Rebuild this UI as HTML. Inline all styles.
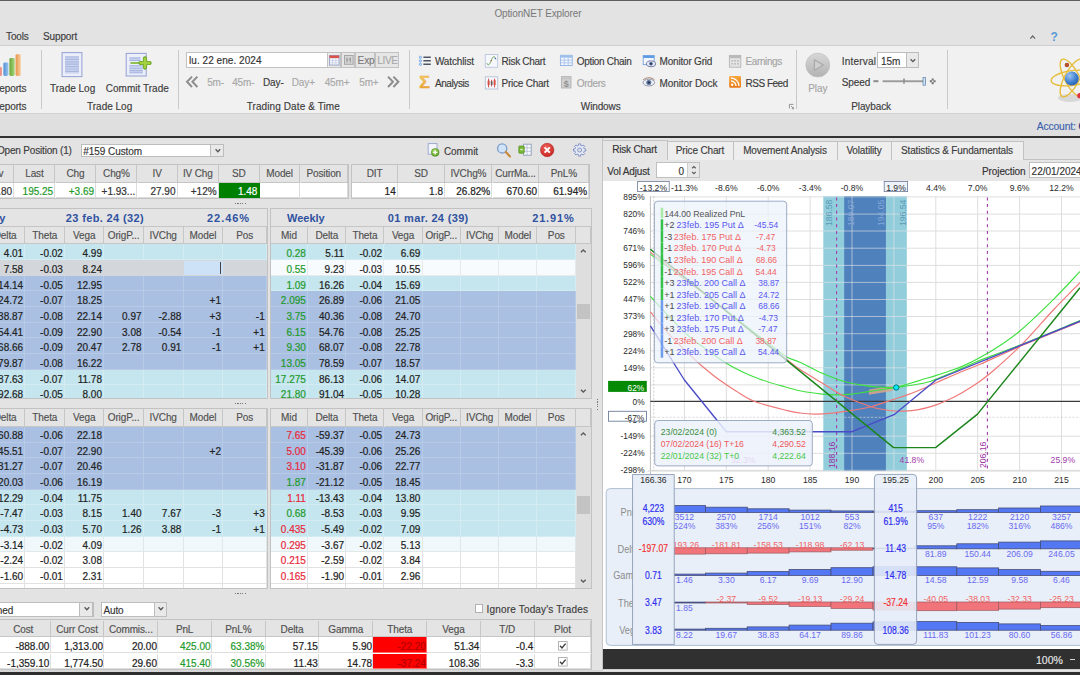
<!DOCTYPE html><html><head><meta charset="utf-8"><title>OptionNET Explorer</title><style>
*{box-sizing:border-box;margin:0;padding:0}
html,body{width:1080px;height:675px;overflow:hidden;background:#e3e3e3}
body{font-family:"Liberation Sans",sans-serif;font-size:10px;color:#333;position:relative;line-height:1}
.a{position:absolute;white-space:nowrap}
.t{-webkit-text-stroke:0.15px currentColor;position:absolute;white-space:nowrap;line-height:12px;height:12px;letter-spacing:-0.12px;color:#3c3c3c}
.c{text-align:center}
.r{text-align:right}
.g{color:#9a9a9a}
.hd{-webkit-text-stroke:0.15px currentColor;position:absolute;background:#e4e4e4;border-right:1px solid #c6c6c6;border-bottom:1px solid #c6c6c6;text-align:center;color:#505050;overflow:hidden;white-space:nowrap;letter-spacing:-0.12px}
.cell{-webkit-text-stroke:0.2px currentColor;position:absolute;overflow:hidden;white-space:nowrap;text-align:right;color:#222;border-right:1px solid rgba(214,221,230,.75);border-bottom:1px solid rgba(214,221,230,.75);padding-right:1.3px}
.gr{color:#1f9a2c !important}
.rd{color:#e8283c !important}
.bh{position:absolute;font-weight:bold;color:#2f52a0;font-size:11px;line-height:14px;white-space:nowrap}
.sep{position:absolute;width:1px;background:#c9c9c9;top:50px;height:59px}
.combo{position:absolute;background:#fff;border:1px solid #bcbcbc}
.cbtn{position:absolute;background:#e6e6e6;border:1px solid #bcbcbc}
</style></head><body>
<div class="a" style="left:0.0px;top:0.0px;width:1080.0px;height:1.0px;background:#5e5e5e"></div>
<div class="t " style="left:494.4px;top:8.1px;color:#787878;letter-spacing:-0.13px;-webkit-text-stroke:0">OptionNET Explorer</div>
<div class="t " style="left:6.0px;top:31.1px;">Tools</div>
<div class="t " style="left:43.0px;top:31.1px;">Support</div>
<svg class="a" style="left:1026px;top:30px" width="40" height="14" viewBox="0 0 40 14"><path d="M4.3 8.6 L6.7 6 L9.1 8.6" fill="none" stroke="#666" stroke-width="1.2"/><text x="24.5" y="11" font-family="Liberation Sans,sans-serif" font-size="12" font-weight="bold" fill="#5b9bd5">?</text></svg>
<div class="a" style="left:0.0px;top:45.0px;width:1080.0px;height:69.0px;background:#f1f1f1;border-top:1px solid #cfcfcf;border-bottom:1px solid #d2d2d2"></div>
<div class="a" style="left:0.0px;top:114.0px;width:1080.0px;height:22.0px;background:#dfdfdf"></div>
<div class="a" style="left:0.0px;top:135.8px;width:1080.0px;height:1.8px;background:#333"></div>
<div class="t " style="left:1036.7px;top:120.7px;color:#3b62ad;font-size:10.3px">Account:</div>
<div class="t " style="left:1078.4px;top:120.7px;color:#2a3f8a;font-size:10.3px;font-weight:bold">C</div>
<div class="sep" style="left:41.3px"></div>
<div class="sep" style="left:177.6px"></div>
<div class="sep" style="left:409.3px"></div>
<div class="sep" style="left:795.6px"></div>
<div class="sep" style="left:947.1px"></div>
<svg class="a" style="left:0;top:52px" width="24" height="26" viewBox="0 0 24 26">
<defs><linearGradient id="br" x1="0" x2="1"><stop offset="0" stop-color="#e06a62"/><stop offset="1" stop-color="#f3a29b"/></linearGradient>
<linearGradient id="bb" x1="0" x2="1"><stop offset="0" stop-color="#4f8fd6"/><stop offset="1" stop-color="#9cc6ee"/></linearGradient>
<linearGradient id="bg" x1="0" x2="1"><stop offset="0" stop-color="#6aa63a"/><stop offset="1" stop-color="#a9d67c"/></linearGradient>
<linearGradient id="bo" x1="0" x2="1"><stop offset="0" stop-color="#e89448"/><stop offset="1" stop-color="#f8cfa0"/></linearGradient></defs>
<rect x="-3" y="15" width="5" height="9" rx="1.2" fill="url(#br)"/>
<rect x="3.4" y="10.4" width="5" height="13.6" rx="1.4" fill="url(#bb)"/>
<rect x="9.4" y="6" width="5.3" height="18" rx="1.4" fill="url(#bg)"/>
<rect x="15.6" y="2.2" width="5.2" height="21.8" rx="1.4" fill="url(#bo)"/>
</svg>
<div class="t " style="left:-7.8px;top:83.4px;">Reports</div>
<div class="t " style="left:-7.8px;top:101.3px;">Reports</div>
<svg class="a" style="left:60px;top:51px" width="24" height="27" viewBox="0 0 24 27">
<rect x="2.1" y="1.6" width="19.8" height="24" fill="#eceffa" stroke="#9ba6d6" stroke-width="1.1"/>
<rect x="5" y="5" width="14" height="17.6" fill="#cdd6f0"/>
<g stroke="#a9b6e0" stroke-width="1.2"><path d="M5 6H19M5 8.4H19M5 10.8H19M5 13.2H19M5 15.6H19M5 18H19M5 20.4H19"/></g></svg>
<div class="t " style="left:50.0px;top:83.4px;letter-spacing:0">Trade Log</div>
<svg class="a" style="left:124px;top:51px" width="28" height="27" viewBox="0 0 28 27">
<rect x="2.2" y="2.4" width="20" height="22.6" fill="#eceffa" stroke="#9ba6d6" stroke-width="1.1"/>
<rect x="5.4" y="6" width="11" height="4" fill="#cdd6f0"/><rect x="5.4" y="14" width="13.4" height="8.4" fill="#cdd6f0"/>
<g stroke="#a9b6e0" stroke-width="1.1"><path d="M5.4 7H16.4M5.4 9.4H16.4M5.4 14.8H18.8M5.4 17.2H18.8M5.4 19.6H18.8M5.4 21.8H18.8"/></g>
<path d="M6.4 12H15.6" stroke="#86bc3e" stroke-width="1.8"/>
<path d="M21 7.4V16.6M16.4 12H25.6" stroke="#6aa524" stroke-width="4.2" stroke-linecap="round"/>
<path d="M21 7.8V16.2M16.8 12H25.2" stroke="#a2d040" stroke-width="2.6" stroke-linecap="round"/></svg>
<div class="t " style="left:105.8px;top:83.4px;letter-spacing:0.02px">Commit Trade</div>
<div class="t " style="left:87.0px;top:101.3px;letter-spacing:0">Trade Log</div>
<div class="a" style="left:186.2px;top:52.2px;width:212.8px;height:16.0px;background:#fff;border:1px solid #c2c2c2"></div>
<div class="t " style="left:189.0px;top:54.6px;color:#333;letter-spacing:0.05px">lu. 22 ene. 2024</div>
<div class="a" style="left:327.3px;top:52.2px;width:14.0px;height:16.0px;background:#ebebeb;border:1px solid #c2c2c2"></div>
<svg class="a" style="left:329px;top:54.5px" width="11" height="11" viewBox="0 0 11 11"><rect x=".5" y=".5" width="9.6" height="9.6" fill="#f4f6fb" stroke="#9aa6c8"/><rect x=".5" y=".5" width="9.6" height="2.6" fill="#d9534a"/><path d="M.5 5.4H10M.5 7.8H10M3.6 3V10M6.8 3V10" stroke="#c5cde2" stroke-width=".7"/></svg>
<div class="a" style="left:341.3px;top:52.2px;width:13.5px;height:16.0px;background:#e6e6e6;border:1px solid #c2c2c2"></div>
<svg class="a" style="left:343.5px;top:55px" width="10" height="10" viewBox="0 0 10 10"><rect x=".5" y=".5" width="8.6" height="8.8" fill="#d6d6d6" stroke="#a6a6a6"/><path d="M3 2.5V7.5M6.3 2.5V7.5M3 5H4.3M5 4.2H6.3" stroke="#8a8a8a" stroke-width=".9"/></svg>
<div class="a" style="left:354.5px;top:52.2px;width:20.3px;height:16.0px;background:#e6e6e6;border:1px solid #c2c2c2"></div>
<div class="t " style="left:357.6px;top:54.6px;color:#7a7a7a;letter-spacing:-0.1px">Exp</div>
<div class="a" style="left:374.5px;top:52.2px;width:24.5px;height:16.0px;background:#e6e6e6;border:1px solid #c2c2c2"></div>
<div class="t " style="left:377.2px;top:54.6px;color:#a9a9a9;letter-spacing:-0.3px">LIVE</div>
<svg class="a" style="left:184px;top:75px" width="216" height="14" viewBox="0 0 216 14"><g fill="none" stroke="#8e8e8e" stroke-width="2"><path d="M8 1.6 L3 6.8 L8 12M13.4 1.6 L8.4 6.8 L13.4 12"/><path d="M204 1.6 L209 6.8 L204 12M209.4 1.6 L214.4 6.8 L209.4 12"/></g></svg>
<div class="t c" style="left:195.6px;top:76.9px;width:40.0px;color:#a8a8a8">5m-</div>
<div class="t c" style="left:223.3px;top:76.9px;width:40.0px;color:#a8a8a8">45m-</div>
<div class="t c" style="left:253.3px;top:76.9px;width:40.0px;">Day-</div>
<div class="t c" style="left:283.3px;top:76.9px;width:40.0px;color:#a8a8a8">Day+</div>
<div class="t c" style="left:317.1px;top:76.9px;width:40.0px;color:#a8a8a8">45m+</div>
<div class="t c" style="left:348.9px;top:76.9px;width:40.0px;color:#a8a8a8">5m+</div>
<div class="t c" style="left:243.3px;top:101.3px;width:100.0px;letter-spacing:0.1px">Trading Date &amp; Time</div>
<div class="t " style="left:434.9px;top:56.2px;letter-spacing:-0.12px;">Watchlist</div>
<div class="t " style="left:434.9px;top:77.8px;letter-spacing:-0.4px;">Analysis</div>
<div class="t " style="left:501.6px;top:56.2px;letter-spacing:-0.3px;">Risk Chart</div>
<div class="t " style="left:501.6px;top:77.8px;letter-spacing:-0.25px;">Price Chart</div>
<div class="t " style="left:576.7px;top:56.2px;letter-spacing:-0.3px;">Option Chain</div>
<div class="t " style="left:576.7px;top:77.8px;letter-spacing:-0.3px;color:#a5a5a5">Orders</div>
<div class="t " style="left:659.6px;top:56.2px;letter-spacing:-0.2px;">Monitor Grid</div>
<div class="t " style="left:659.6px;top:77.8px;letter-spacing:-0.1px;">Monitor Dock</div>
<div class="t " style="left:745.6px;top:56.2px;letter-spacing:-0.4px;color:#a5a5a5">Earnings</div>
<div class="t " style="left:745.6px;top:77.8px;letter-spacing:-0.5px;">RSS Feed</div>
<div class="t c" style="left:570.7px;top:101.3px;width:60.0px;">Windows</div>
<svg class="a" style="left:418px;top:54px" width="376" height="58" viewBox="0 0 376 58">
<!-- watchlist -->
<g stroke="#4d5864" stroke-width="1.5"><path d="M5.4 3.3H12.8M5.4 6.8H12.8M5.4 10.3H12.8"/></g>
<g fill="#d6e8fb" stroke="#5f9de2" stroke-width=".8"><circle cx="2.4" cy="3.3" r="1.1"/><circle cx="2.4" cy="6.8" r="1.1"/><circle cx="2.4" cy="10.3" r="1.1"/></g>
<!-- analysis sigma -->
<defs><linearGradient id="sg" x1="0" y1="0" x2="0" y2="1"><stop offset="0" stop-color="#f9d678"/><stop offset="1" stop-color="#e89a28"/></linearGradient></defs><text x="1.2" y="33.7" font-family="Liberation Sans,sans-serif" font-size="16" font-weight="bold" fill="url(#sg)" stroke="#e6a432" stroke-width=".4" textLength="10.6" lengthAdjust="spacingAndGlyphs">Σ</text>
<!-- risk chart -->
<rect x="67.3" y="0.5" width="12.4" height="12.8" fill="#f5f7fc" stroke="#bcc6de" stroke-width=".9"/>
<path d="M68.8 9.2 C70 12 71.5 11 73 7 S75.5 1.8 77 3.5 L78 5.6" fill="none" stroke="#6aa458" stroke-width="1"/><circle cx="73.2" cy="6.6" r=".7" fill="#d0503c"/><circle cx="77.4" cy="4.4" r=".7" fill="#4a6cc0"/>
<!-- price chart -->
<rect x="67.3" y="22.8" width="12.4" height="12.2" fill="#f7f9fd" stroke="#b4bfd8" stroke-width=".9"/>
<g stroke="#d04a42" stroke-width="1"><path d="M70.6 24.6V33.4M73.6 25.8V32.4M76.6 24.6V33.4"/></g>
<g fill="#d85048"><rect x="69.6" y="26.6" width="2" height="4.4"/><rect x="75.6" y="26.2" width="2" height="4.8"/></g><rect x="72.8" y="27.4" width="1.7" height="3.4" fill="#5a5a5a"/>
<!-- option chain -->
<rect x="142.4" y="1.3" width="11.8" height="10.2" fill="#f4f8fd" stroke="#8fb0e2" stroke-width=".9"/>
<rect x="142.4" y="1.3" width="11.8" height="2.4" fill="#9cc0ec"/>
<g stroke="#a4bde8" stroke-width=".8"><path d="M142.4 6.2H154.2M142.4 8.8H154.2M146.3 3.7V11.5M150.2 3.7V11.5"/></g>
<!-- orders (disabled) -->
<rect x="143.4" y="22.6" width="9.6" height="11.4" fill="#d0d0d0" stroke="#b4b4b4" stroke-width=".9"/><path d="M143.4 24.4H153" stroke="#bcbcbc" stroke-width=".8"/>
<text x="148.2" y="32.6" text-anchor="middle" font-family="Liberation Sans,sans-serif" font-size="9" font-weight="bold" fill="#909090">$</text>
<!-- monitor grid -->
<rect x="225.2" y="1.6" width="11" height="9" fill="#f4f7fc" stroke="#78a2dc" stroke-width=".9"/><rect x="225.2" y="1.6" width="11" height="2.4" fill="#5f9ce6"/>
<ellipse cx="233" cy="9.8" rx="4.6" ry="2.9" fill="#e4e9f4" stroke="#5a6796" stroke-width=".8"/><circle cx="233" cy="9.8" r="1.8" fill="#4a5f8e"/><circle cx="233" cy="9.8" r=".8" fill="#222a48"/>
<!-- monitor dock eye -->
<ellipse cx="230.8" cy="28.6" rx="5.8" ry="3.4" fill="#eef1f7" stroke="#7c819a" stroke-width=".8"/><circle cx="230.8" cy="28.6" r="2.5" fill="#5a7098"/><circle cx="230.8" cy="28.6" r="1" fill="#222a48"/>
<path d="M225 26 C228 23 233.6 23 236.6 26" fill="none" stroke="#a8846a" stroke-width="1"/>
<!-- earnings (disabled calendar) -->
<rect x="311.4" y="1.4" width="11.4" height="11.8" fill="#e4e4e4" stroke="#b4b4b4" stroke-width=".9"/><rect x="311.4" y="1.4" width="11.4" height="2.8" fill="#b9b9b9"/>
<g fill="#bdbdbd"><rect x="313.4" y="6" width="1.8" height="1.6"/><rect x="316.2" y="6" width="1.8" height="1.6"/><rect x="319" y="6" width="1.8" height="1.6"/><rect x="313.4" y="9" width="1.8" height="1.6"/><rect x="316.2" y="9" width="1.8" height="1.6"/><rect x="319" y="9" width="1.8" height="1.6"/></g>
<!-- rss -->
<defs><linearGradient id="rs" x1="0" y1="0" x2="0" y2="1"><stop offset="0" stop-color="#f9a53a"/><stop offset="1" stop-color="#e87a18"/></linearGradient></defs><rect x="311.2" y="22" width="11.8" height="11.8" rx="1.2" fill="url(#rs)"/>
<circle cx="314.2" cy="30.8" r="1.2" fill="#fff"/><path d="M313 27 A5 5 0 0 1 318 32M313 24 A8 8 0 0 1 321 32" fill="none" stroke="#fff" stroke-width="1.3"/>
<!-- dialog launcher -->
<path d="M371.4 50.4H375.4M371.4 50.4V54.4" stroke="#8a8a8a" stroke-width=".9" fill="none"/><path d="M373 52L375.8 54.8M375.8 52.8V54.8H373.8" stroke="#8a8a8a" stroke-width=".9" fill="none"/>
</svg>
<svg class="a" style="left:804px;top:51px" width="28" height="28" viewBox="0 0 28 28">
<defs><linearGradient id="pg" x1="0" y1="0" x2="0" y2="1"><stop offset="0" stop-color="#d8d8d8"/><stop offset="1" stop-color="#b2b2b2"/></linearGradient></defs>
<circle cx="13.8" cy="14.1" r="12" fill="url(#pg)" stroke="#bdbdbd" stroke-width=".6"/>
<path d="M10.4 8.8 L19.2 14.1 L10.4 19.4Z" fill="#cfcfcf" stroke="#a9a9a9" stroke-width="1.2" stroke-linejoin="round"/></svg>
<div class="t c g" style="left:797.8px;top:83.3px;width:40.0px;color:#a5a5a5">Play</div>
<div class="t " style="left:841.8px;top:56.2px;letter-spacing:0.2px">Interval</div>
<div class="a" style="left:877.3px;top:52.4px;width:42.0px;height:15.9px;background:#fff;border:1px solid #bdbdbd"></div>
<div class="a" style="left:905.6px;top:52.4px;width:13.7px;height:15.9px;background:#e9e9e9;border:1px solid #bdbdbd"></div>
<svg class="a" style="left:908.6px;top:57.6px" width="8" height="6" viewBox="0 0 8 6"><path d="M1.6 1.2L3.9 3.6L6.2 1.2" fill="none" stroke="#555" stroke-width="1.3"/></svg>
<div class="t " style="left:881.0px;top:56.2px;color:#333;letter-spacing:0">15m</div>
<div class="t " style="left:841.8px;top:76.9px;letter-spacing:-0.1px">Speed</div>
<svg class="a" style="left:872px;top:75px" width="68" height="14" viewBox="0 0 68 14">
<rect x="1.4" y="5.2" width="5" height="2" fill="#8a8a8a"/>
<rect x="10.6" y="5.3" width="43" height="1.9" fill="#9a9a9a"/>
<path d="M32 3.6V9M31 5H33" stroke="#8a8a8a" stroke-width="1.2"/>
<rect x="51" y="2.6" width="2.6" height="7.6" fill="#cfe3f5" stroke="#5b7fa8" stroke-width=".7"/>
<path d="M57.8 6.3H63.6M60.7 3.4V9.2" stroke="#777" stroke-width="2"/><rect x="59.9" y="5.5" width="1.6" height="1.6" fill="#eee"/>
</svg>
<div class="t c" style="left:841.1px;top:101.3px;width:60.0px;letter-spacing:-0.1px">Playback</div>
<svg class="a" style="left:1047.6px;top:53.6px" width="34" height="54" viewBox="0 0 34 54">
<defs><radialGradient id="nb" cx=".35" cy=".3" r=".8"><stop offset="0" stop-color="#9cc4f2"/><stop offset=".6" stop-color="#3f7fd0"/><stop offset="1" stop-color="#2a5aa8"/></radialGradient></defs>
<ellipse cx="22" cy="44" rx="12" ry="4" fill="#d8d8d8"/>
<g fill="none" stroke="#e6bc38" stroke-width="1.35">
<ellipse cx="24" cy="24" rx="21" ry="7.4" transform="rotate(62 24 24)"/>
<ellipse cx="24" cy="24" rx="21" ry="7.4" transform="rotate(-8 24 24)"/>
<ellipse cx="24" cy="24" rx="21" ry="7.4" transform="rotate(118 24 24)"/></g>
<circle cx="23.8" cy="24.6" r="7" fill="url(#nb)"/>
<circle cx="18.9" cy="11" r="2.3" fill="#b4502a"/><circle cx="31.8" cy="41.7" r="2.6" fill="#e0303c"/>
</svg>
<div class="t " style="left:-3.0px;top:145.4px;letter-spacing:-0.18px">Open Position (1)</div>
<div class="a" style="left:80.6px;top:143.9px;width:143.8px;height:13.4px;background:#fff;border:1px solid #bdbdbd"></div>
<div class="a" style="left:210.3px;top:143.9px;width:14.1px;height:13.4px;background:#e9e9e9;border:1px solid #bdbdbd"></div>
<svg class="a" style="left:213.6px;top:148px" width="8" height="6" viewBox="0 0 8 6"><path d="M1.6 1.3L3.9 3.7L6.2 1.3" fill="none" stroke="#555" stroke-width="1.3"/></svg>
<div class="t " style="left:83.2px;top:145.7px;color:#333;letter-spacing:-0.05px">#159 Custom</div>
<svg class="a" style="left:426px;top:141px" width="166" height="18" viewBox="0 0 166 18">
<defs><radialGradient id="rx" cx=".4" cy=".3" r=".8"><stop offset="0" stop-color="#f0605a"/><stop offset="1" stop-color="#c4201c"/></radialGradient>
<radialGradient id="gp" cx=".4" cy=".3" r=".8"><stop offset="0" stop-color="#a8dc6a"/><stop offset="1" stop-color="#5a9e20"/></radialGradient></defs>
<rect x="2.2" y="2.6" width="8.8" height="10.6" fill="#f3f5fb" stroke="#97a4cf" stroke-width=".9"/>
<circle cx="9.2" cy="11.4" r="3.9" fill="url(#gp)" stroke="#4e8a1e" stroke-width=".6"/><path d="M9.2 9.2V13.6M7 11.4H11.4" stroke="#fff" stroke-width="1.3"/>
<!-- magnifier -->
<circle cx="76.2" cy="7.4" r="4.6" fill="#cfe4f8" stroke="#7d9cc8" stroke-width="1.3"/><path d="M79.8 11L84 15.4" stroke="#c88a3c" stroke-width="2.2" stroke-linecap="round"/>
<!-- grid + green -->
<rect x="97.6" y="3.2" width="7.6" height="11" fill="#f5f7fb" stroke="#8d9bb8" stroke-width=".9"/><path d="M97.6 6.8H105.2M97.6 10.4H105.2M101 3.2V14.2" stroke="#a9b6d0" stroke-width=".7"/>
<rect x="92.8" y="5" width="5.4" height="7.2" rx=".8" fill="#7cb83a" stroke="#4f8a1c" stroke-width=".7"/><path d="M94 8.6H97" stroke="#dff0c4" stroke-width="1"/>
<!-- red x -->
<circle cx="121.2" cy="9" r="6.7" fill="url(#rx)" stroke="#b02422" stroke-width=".6"/><path d="M118.6 6.4L123.8 11.6M123.8 6.4L118.6 11.6" stroke="#fff" stroke-width="2"/>
<!-- gear -->
<g transform="translate(153.6 9)"><path d="M4.56 -1.13L6.12 -1.02L6.12 1.02L4.56 1.13L4.03 2.42L5.04 3.60L3.60 5.04L2.42 4.03L1.13 4.56L1.02 6.12L-1.02 6.12L-1.13 4.56L-2.42 4.03L-3.60 5.04L-5.04 3.60L-4.03 2.42L-4.56 1.13L-6.12 1.02L-6.12 -1.02L-4.56 -1.13L-4.03 -2.42L-5.04 -3.60L-3.60 -5.04L-2.42 -4.03L-1.13 -4.56L-1.02 -6.12L1.02 -6.12L1.13 -4.56L2.42 -4.03L3.60 -5.04L5.04 -3.60L4.03 -2.42Z" fill="#e4e9f7" stroke="#8494c6" stroke-width="1" stroke-linejoin="round"/><circle r="2" fill="#e3e3e3" stroke="#8494c6" stroke-width="1"/></g>
</svg>
<div class="t " style="left:443.9px;top:145.8px;letter-spacing:-0.05px">Commit</div>
<div class="a" style="left:-30.0px;top:164.0px;width:378.6px;height:34.6px;border:1px solid #c2c2c2;background:#e4e4e4"></div>
<div class="a" style="left:-30.0px;top:182.8px;width:378.0px;height:15.2px;background:#fff"></div>
<div class="hd" style="left:-26.6px;top:165.3px;width:41.0px;height:17.5px;line-height:18.1px;">Prev</div>
<div class="cell " style="left:-26.6px;top:182.8px;width:41.0px;height:15.2px;line-height:17.6px;background:#fff;border-color:#dcdcdc;color:#333;">191.80</div>
<div class="hd" style="left:14.4px;top:165.3px;width:41.1px;height:17.5px;line-height:18.1px;">Last</div>
<div class="cell gr" style="left:14.4px;top:182.8px;width:41.1px;height:15.2px;line-height:17.6px;background:#fff;border-color:#dcdcdc;color:#333;">195.25</div>
<div class="hd" style="left:55.5px;top:165.3px;width:40.9px;height:17.5px;line-height:18.1px;">Chg</div>
<div class="cell gr" style="left:55.5px;top:182.8px;width:40.9px;height:15.2px;line-height:17.6px;background:#fff;border-color:#dcdcdc;color:#333;">+3.69</div>
<div class="hd" style="left:96.4px;top:165.3px;width:41.1px;height:17.5px;line-height:18.1px;">Chg%</div>
<div class="cell " style="left:96.4px;top:182.8px;width:41.1px;height:15.2px;line-height:17.6px;background:#fff;border-color:#dcdcdc;color:#333;">+1.93...</div>
<div class="hd" style="left:137.5px;top:165.3px;width:40.3px;height:17.5px;line-height:18.1px;">IV</div>
<div class="cell " style="left:137.5px;top:182.8px;width:40.3px;height:15.2px;line-height:17.6px;background:#fff;border-color:#dcdcdc;color:#333;">27.90</div>
<div class="hd" style="left:177.8px;top:165.3px;width:41.1px;height:17.5px;line-height:18.1px;">IV Chg</div>
<div class="cell " style="left:177.8px;top:182.8px;width:41.1px;height:15.2px;line-height:17.6px;background:#fff;border-color:#dcdcdc;color:#333;">+12%</div>
<div class="hd" style="left:218.9px;top:165.3px;width:40.8px;height:17.5px;line-height:18.1px;">SD</div>
<div class="cell " style="left:218.9px;top:182.8px;width:40.8px;height:15.2px;line-height:17.6px;background:#008000;color:#fff;border-color:#008000;">1.48</div>
<div class="hd" style="left:259.7px;top:165.3px;width:40.8px;height:17.5px;line-height:18.1px;">Model</div>
<div class="cell " style="left:259.7px;top:182.8px;width:40.8px;height:15.2px;line-height:17.6px;background:#fff;border-color:#dcdcdc;color:#333;"></div>
<div class="hd" style="left:300.5px;top:165.3px;width:47.5px;height:17.5px;line-height:18.1px;">Position</div>
<div class="cell " style="left:300.5px;top:182.8px;width:47.5px;height:15.2px;line-height:17.6px;background:#fff;border-color:#dcdcdc;color:#333;"></div>
<div class="a" style="left:351.0px;top:164.0px;width:239.2px;height:34.6px;border:1px solid #c2c2c2;background:#e4e4e4"></div>
<div class="a" style="left:352.0px;top:182.8px;width:237.4px;height:15.2px;background:#fff"></div>
<div class="hd" style="left:352.0px;top:165.3px;width:46.0px;height:17.5px;line-height:18.1px;">DIT</div>
<div class="cell " style="left:352.0px;top:182.8px;width:46.0px;height:15.2px;line-height:17.6px;background:#fff;border-color:#dcdcdc;">14</div>
<div class="hd" style="left:398.0px;top:165.3px;width:47.3px;height:17.5px;line-height:18.1px;">SD</div>
<div class="cell " style="left:398.0px;top:182.8px;width:47.3px;height:15.2px;line-height:17.6px;background:#fff;border-color:#dcdcdc;">1.8</div>
<div class="hd" style="left:445.3px;top:165.3px;width:47.2px;height:17.5px;line-height:18.1px;">IVChg%</div>
<div class="cell " style="left:445.3px;top:182.8px;width:47.2px;height:15.2px;line-height:17.6px;background:#fff;border-color:#dcdcdc;">26.82%</div>
<div class="hd" style="left:492.5px;top:165.3px;width:46.9px;height:17.5px;line-height:18.1px;">CurrMa...</div>
<div class="cell " style="left:492.5px;top:182.8px;width:46.9px;height:15.2px;line-height:17.6px;background:#fff;border-color:#dcdcdc;">670.60</div>
<div class="hd" style="left:539.4px;top:165.3px;width:50.0px;height:17.5px;line-height:18.1px;">PnL%</div>
<div class="cell " style="left:539.4px;top:182.8px;width:50.0px;height:15.2px;line-height:17.6px;background:#fff;border-color:#dcdcdc;">61.94%</div>
<div class="a" style="left:234.6px;top:203.0px;width:11.5px;height:1.2px;background:repeating-linear-gradient(90deg,#777 0,#777 1.2px,transparent 1.2px,transparent 2.4px)"></div>
<div class="a" style="left:234.6px;top:402.7px;width:11.5px;height:1.2px;background:repeating-linear-gradient(90deg,#777 0,#777 1.2px,transparent 1.2px,transparent 2.4px)"></div>
<div class="a" style="left:234.6px;top:592.6px;width:11.5px;height:1.2px;background:repeating-linear-gradient(90deg,#777 0,#777 1.2px,transparent 1.2px,transparent 2.4px)"></div>
<div class="a" style="left:596.6px;top:398.5px;width:1.2px;height:11px;background:repeating-linear-gradient(180deg,#777 0,#777 1.2px,transparent 1.2px,transparent 2.4px)"></div>
<div class="a" style="left:-15.2px;top:208.0px;width:283.2px;height:191.0px;border:1px solid #c2c2c2;background:#e4e4e4;overflow:hidden"></div>
<div class="a" style="left:-14.2px;top:209.4px;width:281.2px;height:17.3px;background:#e4e4e4;border-bottom:1px solid #c6c6c6"></div>
<div class="bh" style="right:1074.6px;top:211.2px;letter-spacing:0px">Monthly</div>
<div class="bh" style="left:65.8px;top:211.2px;letter-spacing:0.36px">23 feb. 24 (32)</div>
<div class="bh" style="left:207.0px;top:211.2px;letter-spacing:0.95px">22.46%</div>
<div class="hd" style="left:-14.2px;top:226.7px;width:39.6px;height:17.7px;line-height:18.3px;">Delta</div>
<div class="hd" style="left:25.4px;top:226.7px;width:39.8px;height:17.7px;line-height:18.3px;">Theta</div>
<div class="hd" style="left:65.2px;top:226.7px;width:39.1px;height:17.7px;line-height:18.3px;">Vega</div>
<div class="hd" style="left:104.3px;top:226.7px;width:39.5px;height:17.7px;line-height:18.3px;">OrigP...</div>
<div class="hd" style="left:143.8px;top:226.7px;width:39.8px;height:17.7px;line-height:18.3px;">IVChg</div>
<div class="hd" style="left:183.6px;top:226.7px;width:39.7px;height:17.7px;line-height:18.3px;">Model</div>
<div class="hd" style="left:223.3px;top:226.7px;width:43.7px;height:17.7px;line-height:18.3px;">Pos</div>
<div class="a" style="left:-14.2px;top:244.4px;width:281.2px;height:153.6px;overflow:hidden">
<div class="cell " style="left:0.0px;top:0.00px;width:39.6px;height:15.72px;line-height:19.9px;background:#c5e6ee;border-color:#d3ecf2;">4.01</div>
<div class="cell " style="left:39.6px;top:0.00px;width:39.8px;height:15.72px;line-height:19.9px;background:#c5e6ee;border-color:#d3ecf2;">-0.02</div>
<div class="cell " style="left:79.4px;top:0.00px;width:39.1px;height:15.72px;line-height:19.9px;background:#c5e6ee;border-color:#d3ecf2;">4.99</div>
<div class="cell " style="left:118.5px;top:0.00px;width:39.5px;height:15.72px;line-height:19.9px;background:#c5e6ee;border-color:#d3ecf2;"></div>
<div class="cell " style="left:158.0px;top:0.00px;width:39.8px;height:15.72px;line-height:19.9px;background:#c5e6ee;border-color:#d3ecf2;"></div>
<div class="cell " style="left:197.8px;top:0.00px;width:39.7px;height:15.72px;line-height:19.9px;background:#c5e6ee;border-color:#d3ecf2;"></div>
<div class="cell " style="left:237.5px;top:0.00px;width:43.7px;height:15.72px;line-height:19.9px;background:#c5e6ee;border-color:#d3ecf2;"></div>
<div class="cell " style="left:0.0px;top:15.67px;width:39.6px;height:15.72px;line-height:19.9px;background:#d3d7db;border-color:#d3d7db;">7.58</div>
<div class="cell " style="left:39.6px;top:15.67px;width:39.8px;height:15.72px;line-height:19.9px;background:#d3d7db;border-color:#d3d7db;">-0.03</div>
<div class="cell " style="left:79.4px;top:15.67px;width:39.1px;height:15.72px;line-height:19.9px;background:#d3d7db;border-color:#d3d7db;">8.24</div>
<div class="cell " style="left:118.5px;top:15.67px;width:39.5px;height:15.72px;line-height:19.9px;background:#d3d7db;border-color:#d3d7db;"></div>
<div class="cell " style="left:158.0px;top:15.67px;width:39.8px;height:15.72px;line-height:19.9px;background:#d3d7db;border-color:#d3d7db;"></div>
<div class="cell " style="left:197.8px;top:15.67px;width:39.7px;height:15.72px;line-height:19.9px;background:#d3d7db;border-color:#d3d7db;"></div>
<div class="cell " style="left:237.5px;top:15.67px;width:43.7px;height:15.72px;line-height:19.9px;background:#d3d7db;border-color:#d3d7db;"></div>
<div class="cell " style="left:0.0px;top:31.34px;width:39.6px;height:15.72px;line-height:19.9px;background:#a9c0e2;border-color:#b7cae6;">14.14</div>
<div class="cell " style="left:39.6px;top:31.34px;width:39.8px;height:15.72px;line-height:19.9px;background:#a9c0e2;border-color:#b7cae6;">-0.05</div>
<div class="cell " style="left:79.4px;top:31.34px;width:39.1px;height:15.72px;line-height:19.9px;background:#a9c0e2;border-color:#b7cae6;">12.95</div>
<div class="cell " style="left:118.5px;top:31.34px;width:39.5px;height:15.72px;line-height:19.9px;background:#a9c0e2;border-color:#b7cae6;"></div>
<div class="cell " style="left:158.0px;top:31.34px;width:39.8px;height:15.72px;line-height:19.9px;background:#a9c0e2;border-color:#b7cae6;"></div>
<div class="cell " style="left:197.8px;top:31.34px;width:39.7px;height:15.72px;line-height:19.9px;background:#a9c0e2;border-color:#b7cae6;"></div>
<div class="cell " style="left:237.5px;top:31.34px;width:43.7px;height:15.72px;line-height:19.9px;background:#a9c0e2;border-color:#b7cae6;"></div>
<div class="cell " style="left:0.0px;top:47.01px;width:39.6px;height:15.72px;line-height:19.9px;background:#a9c0e2;border-color:#b7cae6;">24.72</div>
<div class="cell " style="left:39.6px;top:47.01px;width:39.8px;height:15.72px;line-height:19.9px;background:#a9c0e2;border-color:#b7cae6;">-0.07</div>
<div class="cell " style="left:79.4px;top:47.01px;width:39.1px;height:15.72px;line-height:19.9px;background:#a9c0e2;border-color:#b7cae6;">18.25</div>
<div class="cell " style="left:118.5px;top:47.01px;width:39.5px;height:15.72px;line-height:19.9px;background:#a9c0e2;border-color:#b7cae6;"></div>
<div class="cell " style="left:158.0px;top:47.01px;width:39.8px;height:15.72px;line-height:19.9px;background:#a9c0e2;border-color:#b7cae6;"></div>
<div class="cell " style="left:197.8px;top:47.01px;width:39.7px;height:15.72px;line-height:19.9px;background:#a9c0e2;border-color:#b7cae6;">+1</div>
<div class="cell " style="left:237.5px;top:47.01px;width:43.7px;height:15.72px;line-height:19.9px;background:#a9c0e2;border-color:#b7cae6;"></div>
<div class="cell " style="left:0.0px;top:62.68px;width:39.6px;height:15.72px;line-height:19.9px;background:#a9c0e2;border-color:#b7cae6;">38.87</div>
<div class="cell " style="left:39.6px;top:62.68px;width:39.8px;height:15.72px;line-height:19.9px;background:#a9c0e2;border-color:#b7cae6;">-0.08</div>
<div class="cell " style="left:79.4px;top:62.68px;width:39.1px;height:15.72px;line-height:19.9px;background:#a9c0e2;border-color:#b7cae6;">22.14</div>
<div class="cell " style="left:118.5px;top:62.68px;width:39.5px;height:15.72px;line-height:19.9px;background:#a9c0e2;border-color:#b7cae6;">0.97</div>
<div class="cell " style="left:158.0px;top:62.68px;width:39.8px;height:15.72px;line-height:19.9px;background:#a9c0e2;border-color:#b7cae6;">-2.88</div>
<div class="cell " style="left:197.8px;top:62.68px;width:39.7px;height:15.72px;line-height:19.9px;background:#a9c0e2;border-color:#b7cae6;">+3</div>
<div class="cell " style="left:237.5px;top:62.68px;width:43.7px;height:15.72px;line-height:19.9px;background:#a9c0e2;border-color:#b7cae6;">-1</div>
<div class="cell " style="left:0.0px;top:78.35px;width:39.6px;height:15.72px;line-height:19.9px;background:#a9c0e2;border-color:#b7cae6;">54.41</div>
<div class="cell " style="left:39.6px;top:78.35px;width:39.8px;height:15.72px;line-height:19.9px;background:#a9c0e2;border-color:#b7cae6;">-0.09</div>
<div class="cell " style="left:79.4px;top:78.35px;width:39.1px;height:15.72px;line-height:19.9px;background:#a9c0e2;border-color:#b7cae6;">22.90</div>
<div class="cell " style="left:118.5px;top:78.35px;width:39.5px;height:15.72px;line-height:19.9px;background:#a9c0e2;border-color:#b7cae6;">3.08</div>
<div class="cell " style="left:158.0px;top:78.35px;width:39.8px;height:15.72px;line-height:19.9px;background:#a9c0e2;border-color:#b7cae6;">-0.54</div>
<div class="cell " style="left:197.8px;top:78.35px;width:39.7px;height:15.72px;line-height:19.9px;background:#a9c0e2;border-color:#b7cae6;">-1</div>
<div class="cell " style="left:237.5px;top:78.35px;width:43.7px;height:15.72px;line-height:19.9px;background:#a9c0e2;border-color:#b7cae6;">+1</div>
<div class="cell " style="left:0.0px;top:94.02px;width:39.6px;height:15.72px;line-height:19.9px;background:#a9c0e2;border-color:#b7cae6;">68.66</div>
<div class="cell " style="left:39.6px;top:94.02px;width:39.8px;height:15.72px;line-height:19.9px;background:#a9c0e2;border-color:#b7cae6;">-0.09</div>
<div class="cell " style="left:79.4px;top:94.02px;width:39.1px;height:15.72px;line-height:19.9px;background:#a9c0e2;border-color:#b7cae6;">20.47</div>
<div class="cell " style="left:118.5px;top:94.02px;width:39.5px;height:15.72px;line-height:19.9px;background:#a9c0e2;border-color:#b7cae6;">2.78</div>
<div class="cell " style="left:158.0px;top:94.02px;width:39.8px;height:15.72px;line-height:19.9px;background:#a9c0e2;border-color:#b7cae6;">0.91</div>
<div class="cell " style="left:197.8px;top:94.02px;width:39.7px;height:15.72px;line-height:19.9px;background:#a9c0e2;border-color:#b7cae6;">-1</div>
<div class="cell " style="left:237.5px;top:94.02px;width:43.7px;height:15.72px;line-height:19.9px;background:#a9c0e2;border-color:#b7cae6;">+1</div>
<div class="cell " style="left:0.0px;top:109.69px;width:39.6px;height:15.72px;line-height:19.9px;background:#a9c0e2;border-color:#b7cae6;">79.87</div>
<div class="cell " style="left:39.6px;top:109.69px;width:39.8px;height:15.72px;line-height:19.9px;background:#a9c0e2;border-color:#b7cae6;">-0.08</div>
<div class="cell " style="left:79.4px;top:109.69px;width:39.1px;height:15.72px;line-height:19.9px;background:#a9c0e2;border-color:#b7cae6;">16.22</div>
<div class="cell " style="left:118.5px;top:109.69px;width:39.5px;height:15.72px;line-height:19.9px;background:#a9c0e2;border-color:#b7cae6;"></div>
<div class="cell " style="left:158.0px;top:109.69px;width:39.8px;height:15.72px;line-height:19.9px;background:#a9c0e2;border-color:#b7cae6;"></div>
<div class="cell " style="left:197.8px;top:109.69px;width:39.7px;height:15.72px;line-height:19.9px;background:#a9c0e2;border-color:#b7cae6;"></div>
<div class="cell " style="left:237.5px;top:109.69px;width:43.7px;height:15.72px;line-height:19.9px;background:#a9c0e2;border-color:#b7cae6;"></div>
<div class="cell " style="left:0.0px;top:125.36px;width:39.6px;height:15.72px;line-height:19.9px;background:#c5e6ee;border-color:#d3ecf2;">87.63</div>
<div class="cell " style="left:39.6px;top:125.36px;width:39.8px;height:15.72px;line-height:19.9px;background:#c5e6ee;border-color:#d3ecf2;">-0.07</div>
<div class="cell " style="left:79.4px;top:125.36px;width:39.1px;height:15.72px;line-height:19.9px;background:#c5e6ee;border-color:#d3ecf2;">11.78</div>
<div class="cell " style="left:118.5px;top:125.36px;width:39.5px;height:15.72px;line-height:19.9px;background:#c5e6ee;border-color:#d3ecf2;"></div>
<div class="cell " style="left:158.0px;top:125.36px;width:39.8px;height:15.72px;line-height:19.9px;background:#c5e6ee;border-color:#d3ecf2;"></div>
<div class="cell " style="left:197.8px;top:125.36px;width:39.7px;height:15.72px;line-height:19.9px;background:#c5e6ee;border-color:#d3ecf2;"></div>
<div class="cell " style="left:237.5px;top:125.36px;width:43.7px;height:15.72px;line-height:19.9px;background:#c5e6ee;border-color:#d3ecf2;"></div>
<div class="cell " style="left:0.0px;top:141.03px;width:39.6px;height:15.72px;line-height:19.9px;background:#c5e6ee;border-color:#d3ecf2;">92.68</div>
<div class="cell " style="left:39.6px;top:141.03px;width:39.8px;height:15.72px;line-height:19.9px;background:#c5e6ee;border-color:#d3ecf2;">-0.05</div>
<div class="cell " style="left:79.4px;top:141.03px;width:39.1px;height:15.72px;line-height:19.9px;background:#c5e6ee;border-color:#d3ecf2;">8.00</div>
<div class="cell " style="left:118.5px;top:141.03px;width:39.5px;height:15.72px;line-height:19.9px;background:#c5e6ee;border-color:#d3ecf2;"></div>
<div class="cell " style="left:158.0px;top:141.03px;width:39.8px;height:15.72px;line-height:19.9px;background:#c5e6ee;border-color:#d3ecf2;"></div>
<div class="cell " style="left:197.8px;top:141.03px;width:39.7px;height:15.72px;line-height:19.9px;background:#c5e6ee;border-color:#d3ecf2;"></div>
<div class="cell " style="left:237.5px;top:141.03px;width:43.7px;height:15.72px;line-height:19.9px;background:#c5e6ee;border-color:#d3ecf2;"></div>
</div>
<div class="a" style="left:184.2px;top:260.9px;width:38.5px;height:14.2px;background:#cde2f6"></div>
<div class="a" style="left:220.2px;top:262.0px;width:1.0px;height:12.0px;background:#444"></div>
<div class="a" style="left:269.8px;top:208.0px;width:322.2px;height:191.0px;border:1px solid #c2c2c2;background:#e4e4e4;overflow:hidden"></div>
<div class="a" style="left:270.8px;top:209.4px;width:320.2px;height:17.3px;background:#e4e4e4;border-bottom:1px solid #c6c6c6"></div>
<div class="bh" style="left:287.0px;top:211.2px;letter-spacing:0px">Weekly</div>
<div class="bh" style="left:387.8px;top:211.2px;letter-spacing:0.33px">01 mar. 24 (39)</div>
<div class="bh" style="left:532.2px;top:211.2px;letter-spacing:0.85px">21.91%</div>
<div class="hd" style="left:270.8px;top:226.7px;width:37.4px;height:17.7px;line-height:18.3px;">Mid</div>
<div class="hd" style="left:308.2px;top:226.7px;width:38.2px;height:17.7px;line-height:18.3px;">Delta</div>
<div class="hd" style="left:346.4px;top:226.7px;width:38.1px;height:17.7px;line-height:18.3px;">Theta</div>
<div class="hd" style="left:384.5px;top:226.7px;width:38.1px;height:17.7px;line-height:18.3px;">Vega</div>
<div class="hd" style="left:422.6px;top:226.7px;width:38.4px;height:17.7px;line-height:18.3px;">OrigP...</div>
<div class="hd" style="left:461.0px;top:226.7px;width:38.3px;height:17.7px;line-height:18.3px;">IVChg</div>
<div class="hd" style="left:499.3px;top:226.7px;width:38.1px;height:17.7px;line-height:18.3px;">Model</div>
<div class="hd" style="left:537.4px;top:226.7px;width:38.8px;height:17.7px;line-height:18.3px;">Pos</div>
<div class="hd" style="left:576.2px;top:226.7px;width:14.8px;height:17.7px;line-height:18.3px;"></div>
<div class="a" style="left:270.8px;top:244.4px;width:320.2px;height:153.6px;overflow:hidden">
<div class="cell gr" style="left:0.0px;top:0.00px;width:37.4px;height:15.72px;line-height:19.9px;background:#c5e6ee;border-color:#d3ecf2;">0.28</div>
<div class="cell " style="left:37.4px;top:0.00px;width:38.2px;height:15.72px;line-height:19.9px;background:#c5e6ee;border-color:#d3ecf2;">5.11</div>
<div class="cell " style="left:75.6px;top:0.00px;width:38.1px;height:15.72px;line-height:19.9px;background:#c5e6ee;border-color:#d3ecf2;">-0.02</div>
<div class="cell " style="left:113.7px;top:0.00px;width:38.1px;height:15.72px;line-height:19.9px;background:#c5e6ee;border-color:#d3ecf2;">6.69</div>
<div class="cell " style="left:151.8px;top:0.00px;width:38.4px;height:15.72px;line-height:19.9px;background:#c5e6ee;border-color:#d3ecf2;"></div>
<div class="cell " style="left:190.2px;top:0.00px;width:38.3px;height:15.72px;line-height:19.9px;background:#c5e6ee;border-color:#d3ecf2;"></div>
<div class="cell " style="left:228.5px;top:0.00px;width:38.1px;height:15.72px;line-height:19.9px;background:#c5e6ee;border-color:#d3ecf2;"></div>
<div class="cell " style="left:266.6px;top:0.00px;width:38.8px;height:15.72px;line-height:19.9px;background:#c5e6ee;border-color:#d3ecf2;"></div>
<div class="cell gr" style="left:0.0px;top:15.67px;width:37.4px;height:15.72px;line-height:19.9px;background:#f7fbfd;border-color:#e6eaec;">0.55</div>
<div class="cell " style="left:37.4px;top:15.67px;width:38.2px;height:15.72px;line-height:19.9px;background:#f7fbfd;border-color:#e6eaec;">9.23</div>
<div class="cell " style="left:75.6px;top:15.67px;width:38.1px;height:15.72px;line-height:19.9px;background:#f7fbfd;border-color:#e6eaec;">-0.03</div>
<div class="cell " style="left:113.7px;top:15.67px;width:38.1px;height:15.72px;line-height:19.9px;background:#f7fbfd;border-color:#e6eaec;">10.55</div>
<div class="cell " style="left:151.8px;top:15.67px;width:38.4px;height:15.72px;line-height:19.9px;background:#f7fbfd;border-color:#e6eaec;"></div>
<div class="cell " style="left:190.2px;top:15.67px;width:38.3px;height:15.72px;line-height:19.9px;background:#f7fbfd;border-color:#e6eaec;"></div>
<div class="cell " style="left:228.5px;top:15.67px;width:38.1px;height:15.72px;line-height:19.9px;background:#f7fbfd;border-color:#e6eaec;"></div>
<div class="cell " style="left:266.6px;top:15.67px;width:38.8px;height:15.72px;line-height:19.9px;background:#f7fbfd;border-color:#e6eaec;"></div>
<div class="cell gr" style="left:0.0px;top:31.34px;width:37.4px;height:15.72px;line-height:19.9px;background:#c5e6ee;border-color:#d3ecf2;">1.09</div>
<div class="cell " style="left:37.4px;top:31.34px;width:38.2px;height:15.72px;line-height:19.9px;background:#c5e6ee;border-color:#d3ecf2;">16.26</div>
<div class="cell " style="left:75.6px;top:31.34px;width:38.1px;height:15.72px;line-height:19.9px;background:#c5e6ee;border-color:#d3ecf2;">-0.04</div>
<div class="cell " style="left:113.7px;top:31.34px;width:38.1px;height:15.72px;line-height:19.9px;background:#c5e6ee;border-color:#d3ecf2;">15.69</div>
<div class="cell " style="left:151.8px;top:31.34px;width:38.4px;height:15.72px;line-height:19.9px;background:#c5e6ee;border-color:#d3ecf2;"></div>
<div class="cell " style="left:190.2px;top:31.34px;width:38.3px;height:15.72px;line-height:19.9px;background:#c5e6ee;border-color:#d3ecf2;"></div>
<div class="cell " style="left:228.5px;top:31.34px;width:38.1px;height:15.72px;line-height:19.9px;background:#c5e6ee;border-color:#d3ecf2;"></div>
<div class="cell " style="left:266.6px;top:31.34px;width:38.8px;height:15.72px;line-height:19.9px;background:#c5e6ee;border-color:#d3ecf2;"></div>
<div class="cell gr" style="left:0.0px;top:47.01px;width:37.4px;height:15.72px;line-height:19.9px;background:#a9c0e2;border-color:#b7cae6;">2.095</div>
<div class="cell " style="left:37.4px;top:47.01px;width:38.2px;height:15.72px;line-height:19.9px;background:#a9c0e2;border-color:#b7cae6;">26.89</div>
<div class="cell " style="left:75.6px;top:47.01px;width:38.1px;height:15.72px;line-height:19.9px;background:#a9c0e2;border-color:#b7cae6;">-0.06</div>
<div class="cell " style="left:113.7px;top:47.01px;width:38.1px;height:15.72px;line-height:19.9px;background:#a9c0e2;border-color:#b7cae6;">21.05</div>
<div class="cell " style="left:151.8px;top:47.01px;width:38.4px;height:15.72px;line-height:19.9px;background:#a9c0e2;border-color:#b7cae6;"></div>
<div class="cell " style="left:190.2px;top:47.01px;width:38.3px;height:15.72px;line-height:19.9px;background:#a9c0e2;border-color:#b7cae6;"></div>
<div class="cell " style="left:228.5px;top:47.01px;width:38.1px;height:15.72px;line-height:19.9px;background:#a9c0e2;border-color:#b7cae6;"></div>
<div class="cell " style="left:266.6px;top:47.01px;width:38.8px;height:15.72px;line-height:19.9px;background:#a9c0e2;border-color:#b7cae6;"></div>
<div class="cell gr" style="left:0.0px;top:62.68px;width:37.4px;height:15.72px;line-height:19.9px;background:#a9c0e2;border-color:#b7cae6;">3.75</div>
<div class="cell " style="left:37.4px;top:62.68px;width:38.2px;height:15.72px;line-height:19.9px;background:#a9c0e2;border-color:#b7cae6;">40.36</div>
<div class="cell " style="left:75.6px;top:62.68px;width:38.1px;height:15.72px;line-height:19.9px;background:#a9c0e2;border-color:#b7cae6;">-0.08</div>
<div class="cell " style="left:113.7px;top:62.68px;width:38.1px;height:15.72px;line-height:19.9px;background:#a9c0e2;border-color:#b7cae6;">24.70</div>
<div class="cell " style="left:151.8px;top:62.68px;width:38.4px;height:15.72px;line-height:19.9px;background:#a9c0e2;border-color:#b7cae6;"></div>
<div class="cell " style="left:190.2px;top:62.68px;width:38.3px;height:15.72px;line-height:19.9px;background:#a9c0e2;border-color:#b7cae6;"></div>
<div class="cell " style="left:228.5px;top:62.68px;width:38.1px;height:15.72px;line-height:19.9px;background:#a9c0e2;border-color:#b7cae6;"></div>
<div class="cell " style="left:266.6px;top:62.68px;width:38.8px;height:15.72px;line-height:19.9px;background:#a9c0e2;border-color:#b7cae6;"></div>
<div class="cell gr" style="left:0.0px;top:78.35px;width:37.4px;height:15.72px;line-height:19.9px;background:#a9c0e2;border-color:#b7cae6;">6.15</div>
<div class="cell " style="left:37.4px;top:78.35px;width:38.2px;height:15.72px;line-height:19.9px;background:#a9c0e2;border-color:#b7cae6;">54.76</div>
<div class="cell " style="left:75.6px;top:78.35px;width:38.1px;height:15.72px;line-height:19.9px;background:#a9c0e2;border-color:#b7cae6;">-0.08</div>
<div class="cell " style="left:113.7px;top:78.35px;width:38.1px;height:15.72px;line-height:19.9px;background:#a9c0e2;border-color:#b7cae6;">25.25</div>
<div class="cell " style="left:151.8px;top:78.35px;width:38.4px;height:15.72px;line-height:19.9px;background:#a9c0e2;border-color:#b7cae6;"></div>
<div class="cell " style="left:190.2px;top:78.35px;width:38.3px;height:15.72px;line-height:19.9px;background:#a9c0e2;border-color:#b7cae6;"></div>
<div class="cell " style="left:228.5px;top:78.35px;width:38.1px;height:15.72px;line-height:19.9px;background:#a9c0e2;border-color:#b7cae6;"></div>
<div class="cell " style="left:266.6px;top:78.35px;width:38.8px;height:15.72px;line-height:19.9px;background:#a9c0e2;border-color:#b7cae6;"></div>
<div class="cell gr" style="left:0.0px;top:94.02px;width:37.4px;height:15.72px;line-height:19.9px;background:#a9c0e2;border-color:#b7cae6;">9.30</div>
<div class="cell " style="left:37.4px;top:94.02px;width:38.2px;height:15.72px;line-height:19.9px;background:#a9c0e2;border-color:#b7cae6;">68.07</div>
<div class="cell " style="left:75.6px;top:94.02px;width:38.1px;height:15.72px;line-height:19.9px;background:#a9c0e2;border-color:#b7cae6;">-0.08</div>
<div class="cell " style="left:113.7px;top:94.02px;width:38.1px;height:15.72px;line-height:19.9px;background:#a9c0e2;border-color:#b7cae6;">22.78</div>
<div class="cell " style="left:151.8px;top:94.02px;width:38.4px;height:15.72px;line-height:19.9px;background:#a9c0e2;border-color:#b7cae6;"></div>
<div class="cell " style="left:190.2px;top:94.02px;width:38.3px;height:15.72px;line-height:19.9px;background:#a9c0e2;border-color:#b7cae6;"></div>
<div class="cell " style="left:228.5px;top:94.02px;width:38.1px;height:15.72px;line-height:19.9px;background:#a9c0e2;border-color:#b7cae6;"></div>
<div class="cell " style="left:266.6px;top:94.02px;width:38.8px;height:15.72px;line-height:19.9px;background:#a9c0e2;border-color:#b7cae6;"></div>
<div class="cell gr" style="left:0.0px;top:109.69px;width:37.4px;height:15.72px;line-height:19.9px;background:#a9c0e2;border-color:#b7cae6;">13.05</div>
<div class="cell " style="left:37.4px;top:109.69px;width:38.2px;height:15.72px;line-height:19.9px;background:#a9c0e2;border-color:#b7cae6;">78.59</div>
<div class="cell " style="left:75.6px;top:109.69px;width:38.1px;height:15.72px;line-height:19.9px;background:#a9c0e2;border-color:#b7cae6;">-0.07</div>
<div class="cell " style="left:113.7px;top:109.69px;width:38.1px;height:15.72px;line-height:19.9px;background:#a9c0e2;border-color:#b7cae6;">18.57</div>
<div class="cell " style="left:151.8px;top:109.69px;width:38.4px;height:15.72px;line-height:19.9px;background:#a9c0e2;border-color:#b7cae6;"></div>
<div class="cell " style="left:190.2px;top:109.69px;width:38.3px;height:15.72px;line-height:19.9px;background:#a9c0e2;border-color:#b7cae6;"></div>
<div class="cell " style="left:228.5px;top:109.69px;width:38.1px;height:15.72px;line-height:19.9px;background:#a9c0e2;border-color:#b7cae6;"></div>
<div class="cell " style="left:266.6px;top:109.69px;width:38.8px;height:15.72px;line-height:19.9px;background:#a9c0e2;border-color:#b7cae6;"></div>
<div class="cell gr" style="left:0.0px;top:125.36px;width:37.4px;height:15.72px;line-height:19.9px;background:#c5e6ee;border-color:#d3ecf2;">17.275</div>
<div class="cell " style="left:37.4px;top:125.36px;width:38.2px;height:15.72px;line-height:19.9px;background:#c5e6ee;border-color:#d3ecf2;">86.13</div>
<div class="cell " style="left:75.6px;top:125.36px;width:38.1px;height:15.72px;line-height:19.9px;background:#c5e6ee;border-color:#d3ecf2;">-0.06</div>
<div class="cell " style="left:113.7px;top:125.36px;width:38.1px;height:15.72px;line-height:19.9px;background:#c5e6ee;border-color:#d3ecf2;">14.07</div>
<div class="cell " style="left:151.8px;top:125.36px;width:38.4px;height:15.72px;line-height:19.9px;background:#c5e6ee;border-color:#d3ecf2;"></div>
<div class="cell " style="left:190.2px;top:125.36px;width:38.3px;height:15.72px;line-height:19.9px;background:#c5e6ee;border-color:#d3ecf2;"></div>
<div class="cell " style="left:228.5px;top:125.36px;width:38.1px;height:15.72px;line-height:19.9px;background:#c5e6ee;border-color:#d3ecf2;"></div>
<div class="cell " style="left:266.6px;top:125.36px;width:38.8px;height:15.72px;line-height:19.9px;background:#c5e6ee;border-color:#d3ecf2;"></div>
<div class="cell gr" style="left:0.0px;top:141.03px;width:37.4px;height:15.72px;line-height:19.9px;background:#c5e6ee;border-color:#d3ecf2;">21.80</div>
<div class="cell " style="left:37.4px;top:141.03px;width:38.2px;height:15.72px;line-height:19.9px;background:#c5e6ee;border-color:#d3ecf2;">91.04</div>
<div class="cell " style="left:75.6px;top:141.03px;width:38.1px;height:15.72px;line-height:19.9px;background:#c5e6ee;border-color:#d3ecf2;">-0.05</div>
<div class="cell " style="left:113.7px;top:141.03px;width:38.1px;height:15.72px;line-height:19.9px;background:#c5e6ee;border-color:#d3ecf2;">10.28</div>
<div class="cell " style="left:151.8px;top:141.03px;width:38.4px;height:15.72px;line-height:19.9px;background:#c5e6ee;border-color:#d3ecf2;"></div>
<div class="cell " style="left:190.2px;top:141.03px;width:38.3px;height:15.72px;line-height:19.9px;background:#c5e6ee;border-color:#d3ecf2;"></div>
<div class="cell " style="left:228.5px;top:141.03px;width:38.1px;height:15.72px;line-height:19.9px;background:#c5e6ee;border-color:#d3ecf2;"></div>
<div class="cell " style="left:266.6px;top:141.03px;width:38.8px;height:15.72px;line-height:19.9px;background:#c5e6ee;border-color:#d3ecf2;"></div>
</div>
<div class="a" style="left:576.2px;top:244.4px;width:14.8px;height:153.6px;background:#dedede"></div>
<div class="a" style="left:576.8px;top:303.6px;width:13.6px;height:15.4px;background:#c3c3c3"></div>
<svg class="a" style="left:579.4px;top:248.4px" width="9" height="6" viewBox="0 0 9 6"><path d="M1.9 4.3L4.3 2L6.7 4.3" fill="none" stroke="#5c5c5c" stroke-width="1.35"/></svg>
<svg class="a" style="left:579.4px;top:388.4px" width="9" height="6" viewBox="0 0 9 6"><path d="M1.9 1.7L4.3 4L6.7 1.7" fill="none" stroke="#5c5c5c" stroke-width="1.35"/></svg>
<div class="a" style="left:-15.2px;top:408.0px;width:283.2px;height:181.0px;border:1px solid #c2c2c2;background:#e4e4e4;overflow:hidden"></div>
<div class="hd" style="left:-14.2px;top:409.3px;width:39.6px;height:17.7px;line-height:18.3px;">Delta</div>
<div class="hd" style="left:25.4px;top:409.3px;width:39.8px;height:17.7px;line-height:18.3px;">Theta</div>
<div class="hd" style="left:65.2px;top:409.3px;width:39.1px;height:17.7px;line-height:18.3px;">Vega</div>
<div class="hd" style="left:104.3px;top:409.3px;width:39.5px;height:17.7px;line-height:18.3px;">OrigP...</div>
<div class="hd" style="left:143.8px;top:409.3px;width:39.8px;height:17.7px;line-height:18.3px;">IVChg</div>
<div class="hd" style="left:183.6px;top:409.3px;width:39.7px;height:17.7px;line-height:18.3px;">Model</div>
<div class="hd" style="left:223.3px;top:409.3px;width:43.7px;height:17.7px;line-height:18.3px;">Pos</div>
<div class="a" style="left:-14.2px;top:427.0px;width:281.2px;height:161.0px;overflow:hidden">
<div class="cell " style="left:0.0px;top:0.00px;width:39.6px;height:15.72px;line-height:18.3px;background:#a9c0e2;border-color:#b7cae6;">-60.88</div>
<div class="cell " style="left:39.6px;top:0.00px;width:39.8px;height:15.72px;line-height:18.3px;background:#a9c0e2;border-color:#b7cae6;">-0.06</div>
<div class="cell " style="left:79.4px;top:0.00px;width:39.1px;height:15.72px;line-height:18.3px;background:#a9c0e2;border-color:#b7cae6;">22.18</div>
<div class="cell " style="left:118.5px;top:0.00px;width:39.5px;height:15.72px;line-height:18.3px;background:#a9c0e2;border-color:#b7cae6;"></div>
<div class="cell " style="left:158.0px;top:0.00px;width:39.8px;height:15.72px;line-height:18.3px;background:#a9c0e2;border-color:#b7cae6;"></div>
<div class="cell " style="left:197.8px;top:0.00px;width:39.7px;height:15.72px;line-height:18.3px;background:#a9c0e2;border-color:#b7cae6;"></div>
<div class="cell " style="left:237.5px;top:0.00px;width:43.7px;height:15.72px;line-height:18.3px;background:#a9c0e2;border-color:#b7cae6;"></div>
<div class="cell " style="left:0.0px;top:15.67px;width:39.6px;height:15.72px;line-height:18.3px;background:#a9c0e2;border-color:#b7cae6;">-45.51</div>
<div class="cell " style="left:39.6px;top:15.67px;width:39.8px;height:15.72px;line-height:18.3px;background:#a9c0e2;border-color:#b7cae6;">-0.07</div>
<div class="cell " style="left:79.4px;top:15.67px;width:39.1px;height:15.72px;line-height:18.3px;background:#a9c0e2;border-color:#b7cae6;">22.90</div>
<div class="cell " style="left:118.5px;top:15.67px;width:39.5px;height:15.72px;line-height:18.3px;background:#a9c0e2;border-color:#b7cae6;"></div>
<div class="cell " style="left:158.0px;top:15.67px;width:39.8px;height:15.72px;line-height:18.3px;background:#a9c0e2;border-color:#b7cae6;"></div>
<div class="cell " style="left:197.8px;top:15.67px;width:39.7px;height:15.72px;line-height:18.3px;background:#a9c0e2;border-color:#b7cae6;">+2</div>
<div class="cell " style="left:237.5px;top:15.67px;width:43.7px;height:15.72px;line-height:18.3px;background:#a9c0e2;border-color:#b7cae6;"></div>
<div class="cell " style="left:0.0px;top:31.34px;width:39.6px;height:15.72px;line-height:18.3px;background:#a9c0e2;border-color:#b7cae6;">-31.27</div>
<div class="cell " style="left:39.6px;top:31.34px;width:39.8px;height:15.72px;line-height:18.3px;background:#a9c0e2;border-color:#b7cae6;">-0.07</div>
<div class="cell " style="left:79.4px;top:31.34px;width:39.1px;height:15.72px;line-height:18.3px;background:#a9c0e2;border-color:#b7cae6;">20.46</div>
<div class="cell " style="left:118.5px;top:31.34px;width:39.5px;height:15.72px;line-height:18.3px;background:#a9c0e2;border-color:#b7cae6;"></div>
<div class="cell " style="left:158.0px;top:31.34px;width:39.8px;height:15.72px;line-height:18.3px;background:#a9c0e2;border-color:#b7cae6;"></div>
<div class="cell " style="left:197.8px;top:31.34px;width:39.7px;height:15.72px;line-height:18.3px;background:#a9c0e2;border-color:#b7cae6;"></div>
<div class="cell " style="left:237.5px;top:31.34px;width:43.7px;height:15.72px;line-height:18.3px;background:#a9c0e2;border-color:#b7cae6;"></div>
<div class="cell " style="left:0.0px;top:47.01px;width:39.6px;height:15.72px;line-height:18.3px;background:#a9c0e2;border-color:#b7cae6;">-20.03</div>
<div class="cell " style="left:39.6px;top:47.01px;width:39.8px;height:15.72px;line-height:18.3px;background:#a9c0e2;border-color:#b7cae6;">-0.06</div>
<div class="cell " style="left:79.4px;top:47.01px;width:39.1px;height:15.72px;line-height:18.3px;background:#a9c0e2;border-color:#b7cae6;">16.19</div>
<div class="cell " style="left:118.5px;top:47.01px;width:39.5px;height:15.72px;line-height:18.3px;background:#a9c0e2;border-color:#b7cae6;"></div>
<div class="cell " style="left:158.0px;top:47.01px;width:39.8px;height:15.72px;line-height:18.3px;background:#a9c0e2;border-color:#b7cae6;"></div>
<div class="cell " style="left:197.8px;top:47.01px;width:39.7px;height:15.72px;line-height:18.3px;background:#a9c0e2;border-color:#b7cae6;"></div>
<div class="cell " style="left:237.5px;top:47.01px;width:43.7px;height:15.72px;line-height:18.3px;background:#a9c0e2;border-color:#b7cae6;"></div>
<div class="cell " style="left:0.0px;top:62.68px;width:39.6px;height:15.72px;line-height:18.3px;background:#c5e6ee;border-color:#d3ecf2;">-12.29</div>
<div class="cell " style="left:39.6px;top:62.68px;width:39.8px;height:15.72px;line-height:18.3px;background:#c5e6ee;border-color:#d3ecf2;">-0.04</div>
<div class="cell " style="left:79.4px;top:62.68px;width:39.1px;height:15.72px;line-height:18.3px;background:#c5e6ee;border-color:#d3ecf2;">11.75</div>
<div class="cell " style="left:118.5px;top:62.68px;width:39.5px;height:15.72px;line-height:18.3px;background:#c5e6ee;border-color:#d3ecf2;"></div>
<div class="cell " style="left:158.0px;top:62.68px;width:39.8px;height:15.72px;line-height:18.3px;background:#c5e6ee;border-color:#d3ecf2;"></div>
<div class="cell " style="left:197.8px;top:62.68px;width:39.7px;height:15.72px;line-height:18.3px;background:#c5e6ee;border-color:#d3ecf2;"></div>
<div class="cell " style="left:237.5px;top:62.68px;width:43.7px;height:15.72px;line-height:18.3px;background:#c5e6ee;border-color:#d3ecf2;"></div>
<div class="cell " style="left:0.0px;top:78.35px;width:39.6px;height:15.72px;line-height:18.3px;background:#c5e6ee;border-color:#d3ecf2;">-7.47</div>
<div class="cell " style="left:39.6px;top:78.35px;width:39.8px;height:15.72px;line-height:18.3px;background:#c5e6ee;border-color:#d3ecf2;">-0.03</div>
<div class="cell " style="left:79.4px;top:78.35px;width:39.1px;height:15.72px;line-height:18.3px;background:#c5e6ee;border-color:#d3ecf2;">8.15</div>
<div class="cell " style="left:118.5px;top:78.35px;width:39.5px;height:15.72px;line-height:18.3px;background:#c5e6ee;border-color:#d3ecf2;">1.40</div>
<div class="cell " style="left:158.0px;top:78.35px;width:39.8px;height:15.72px;line-height:18.3px;background:#c5e6ee;border-color:#d3ecf2;">7.67</div>
<div class="cell " style="left:197.8px;top:78.35px;width:39.7px;height:15.72px;line-height:18.3px;background:#c5e6ee;border-color:#d3ecf2;">-3</div>
<div class="cell " style="left:237.5px;top:78.35px;width:43.7px;height:15.72px;line-height:18.3px;background:#c5e6ee;border-color:#d3ecf2;">+3</div>
<div class="cell " style="left:0.0px;top:94.02px;width:39.6px;height:15.72px;line-height:18.3px;background:#c5e6ee;border-color:#d3ecf2;">-4.73</div>
<div class="cell " style="left:39.6px;top:94.02px;width:39.8px;height:15.72px;line-height:18.3px;background:#c5e6ee;border-color:#d3ecf2;">-0.03</div>
<div class="cell " style="left:79.4px;top:94.02px;width:39.1px;height:15.72px;line-height:18.3px;background:#c5e6ee;border-color:#d3ecf2;">5.70</div>
<div class="cell " style="left:118.5px;top:94.02px;width:39.5px;height:15.72px;line-height:18.3px;background:#c5e6ee;border-color:#d3ecf2;">1.26</div>
<div class="cell " style="left:158.0px;top:94.02px;width:39.8px;height:15.72px;line-height:18.3px;background:#c5e6ee;border-color:#d3ecf2;">3.88</div>
<div class="cell " style="left:197.8px;top:94.02px;width:39.7px;height:15.72px;line-height:18.3px;background:#c5e6ee;border-color:#d3ecf2;">-1</div>
<div class="cell " style="left:237.5px;top:94.02px;width:43.7px;height:15.72px;line-height:18.3px;background:#c5e6ee;border-color:#d3ecf2;">+1</div>
<div class="cell " style="left:0.0px;top:109.69px;width:39.6px;height:15.72px;line-height:18.3px;background:#f1f8fb;border-color:#e0e8ea;">-3.14</div>
<div class="cell " style="left:39.6px;top:109.69px;width:39.8px;height:15.72px;line-height:18.3px;background:#f1f8fb;border-color:#e0e8ea;">-0.02</div>
<div class="cell " style="left:79.4px;top:109.69px;width:39.1px;height:15.72px;line-height:18.3px;background:#f1f8fb;border-color:#e0e8ea;">4.09</div>
<div class="cell " style="left:118.5px;top:109.69px;width:39.5px;height:15.72px;line-height:18.3px;background:#f1f8fb;border-color:#e0e8ea;"></div>
<div class="cell " style="left:158.0px;top:109.69px;width:39.8px;height:15.72px;line-height:18.3px;background:#f1f8fb;border-color:#e0e8ea;"></div>
<div class="cell " style="left:197.8px;top:109.69px;width:39.7px;height:15.72px;line-height:18.3px;background:#f1f8fb;border-color:#e0e8ea;"></div>
<div class="cell " style="left:237.5px;top:109.69px;width:43.7px;height:15.72px;line-height:18.3px;background:#f1f8fb;border-color:#e0e8ea;"></div>
<div class="cell " style="left:0.0px;top:125.36px;width:39.6px;height:15.72px;line-height:18.3px;background:#ffffff;border-color:#e2e2e2;">-2.24</div>
<div class="cell " style="left:39.6px;top:125.36px;width:39.8px;height:15.72px;line-height:18.3px;background:#ffffff;border-color:#e2e2e2;">-0.02</div>
<div class="cell " style="left:79.4px;top:125.36px;width:39.1px;height:15.72px;line-height:18.3px;background:#ffffff;border-color:#e2e2e2;">3.08</div>
<div class="cell " style="left:118.5px;top:125.36px;width:39.5px;height:15.72px;line-height:18.3px;background:#ffffff;border-color:#e2e2e2;"></div>
<div class="cell " style="left:158.0px;top:125.36px;width:39.8px;height:15.72px;line-height:18.3px;background:#ffffff;border-color:#e2e2e2;"></div>
<div class="cell " style="left:197.8px;top:125.36px;width:39.7px;height:15.72px;line-height:18.3px;background:#ffffff;border-color:#e2e2e2;"></div>
<div class="cell " style="left:237.5px;top:125.36px;width:43.7px;height:15.72px;line-height:18.3px;background:#ffffff;border-color:#e2e2e2;"></div>
<div class="cell " style="left:0.0px;top:141.03px;width:39.6px;height:15.72px;line-height:18.3px;background:#ffffff;border-color:#e2e2e2;">-1.60</div>
<div class="cell " style="left:39.6px;top:141.03px;width:39.8px;height:15.72px;line-height:18.3px;background:#ffffff;border-color:#e2e2e2;">-0.01</div>
<div class="cell " style="left:79.4px;top:141.03px;width:39.1px;height:15.72px;line-height:18.3px;background:#ffffff;border-color:#e2e2e2;">2.31</div>
<div class="cell " style="left:118.5px;top:141.03px;width:39.5px;height:15.72px;line-height:18.3px;background:#ffffff;border-color:#e2e2e2;"></div>
<div class="cell " style="left:158.0px;top:141.03px;width:39.8px;height:15.72px;line-height:18.3px;background:#ffffff;border-color:#e2e2e2;"></div>
<div class="cell " style="left:197.8px;top:141.03px;width:39.7px;height:15.72px;line-height:18.3px;background:#ffffff;border-color:#e2e2e2;"></div>
<div class="cell " style="left:237.5px;top:141.03px;width:43.7px;height:15.72px;line-height:18.3px;background:#ffffff;border-color:#e2e2e2;"></div>
<div class="cell " style="left:0.0px;top:156.70px;width:39.6px;height:15.72px;line-height:18.3px;background:#ffffff;border-color:#e2e2e2;"></div>
<div class="cell " style="left:39.6px;top:156.70px;width:39.8px;height:15.72px;line-height:18.3px;background:#ffffff;border-color:#e2e2e2;"></div>
<div class="cell " style="left:79.4px;top:156.70px;width:39.1px;height:15.72px;line-height:18.3px;background:#ffffff;border-color:#e2e2e2;"></div>
<div class="cell " style="left:118.5px;top:156.70px;width:39.5px;height:15.72px;line-height:18.3px;background:#ffffff;border-color:#e2e2e2;"></div>
<div class="cell " style="left:158.0px;top:156.70px;width:39.8px;height:15.72px;line-height:18.3px;background:#ffffff;border-color:#e2e2e2;"></div>
<div class="cell " style="left:197.8px;top:156.70px;width:39.7px;height:15.72px;line-height:18.3px;background:#ffffff;border-color:#e2e2e2;"></div>
<div class="cell " style="left:237.5px;top:156.70px;width:43.7px;height:15.72px;line-height:18.3px;background:#ffffff;border-color:#e2e2e2;"></div>
</div>
<div class="a" style="left:269.8px;top:408.0px;width:322.2px;height:181.0px;border:1px solid #c2c2c2;background:#e4e4e4;overflow:hidden"></div>
<div class="hd" style="left:270.8px;top:409.3px;width:37.4px;height:17.7px;line-height:18.3px;">Mid</div>
<div class="hd" style="left:308.2px;top:409.3px;width:38.2px;height:17.7px;line-height:18.3px;">Delta</div>
<div class="hd" style="left:346.4px;top:409.3px;width:38.1px;height:17.7px;line-height:18.3px;">Theta</div>
<div class="hd" style="left:384.5px;top:409.3px;width:38.1px;height:17.7px;line-height:18.3px;">Vega</div>
<div class="hd" style="left:422.6px;top:409.3px;width:38.4px;height:17.7px;line-height:18.3px;">OrigP...</div>
<div class="hd" style="left:461.0px;top:409.3px;width:38.3px;height:17.7px;line-height:18.3px;">IVChg</div>
<div class="hd" style="left:499.3px;top:409.3px;width:38.1px;height:17.7px;line-height:18.3px;">Model</div>
<div class="hd" style="left:537.4px;top:409.3px;width:38.8px;height:17.7px;line-height:18.3px;">Pos</div>
<div class="hd" style="left:576.2px;top:409.3px;width:14.8px;height:17.7px;line-height:18.3px;"></div>
<div class="a" style="left:270.8px;top:427.0px;width:320.2px;height:161.0px;overflow:hidden">
<div class="cell rd" style="left:0.0px;top:0.00px;width:37.4px;height:15.72px;line-height:18.3px;background:#a9c0e2;border-color:#b7cae6;">7.65</div>
<div class="cell " style="left:37.4px;top:0.00px;width:38.2px;height:15.72px;line-height:18.3px;background:#a9c0e2;border-color:#b7cae6;">-59.37</div>
<div class="cell " style="left:75.6px;top:0.00px;width:38.1px;height:15.72px;line-height:18.3px;background:#a9c0e2;border-color:#b7cae6;">-0.05</div>
<div class="cell " style="left:113.7px;top:0.00px;width:38.1px;height:15.72px;line-height:18.3px;background:#a9c0e2;border-color:#b7cae6;">24.73</div>
<div class="cell " style="left:151.8px;top:0.00px;width:38.4px;height:15.72px;line-height:18.3px;background:#a9c0e2;border-color:#b7cae6;"></div>
<div class="cell " style="left:190.2px;top:0.00px;width:38.3px;height:15.72px;line-height:18.3px;background:#a9c0e2;border-color:#b7cae6;"></div>
<div class="cell " style="left:228.5px;top:0.00px;width:38.1px;height:15.72px;line-height:18.3px;background:#a9c0e2;border-color:#b7cae6;"></div>
<div class="cell " style="left:266.6px;top:0.00px;width:38.8px;height:15.72px;line-height:18.3px;background:#a9c0e2;border-color:#b7cae6;"></div>
<div class="cell rd" style="left:0.0px;top:15.67px;width:37.4px;height:15.72px;line-height:18.3px;background:#a9c0e2;border-color:#b7cae6;">5.00</div>
<div class="cell " style="left:37.4px;top:15.67px;width:38.2px;height:15.72px;line-height:18.3px;background:#a9c0e2;border-color:#b7cae6;">-45.39</div>
<div class="cell " style="left:75.6px;top:15.67px;width:38.1px;height:15.72px;line-height:18.3px;background:#a9c0e2;border-color:#b7cae6;">-0.06</div>
<div class="cell " style="left:113.7px;top:15.67px;width:38.1px;height:15.72px;line-height:18.3px;background:#a9c0e2;border-color:#b7cae6;">25.26</div>
<div class="cell " style="left:151.8px;top:15.67px;width:38.4px;height:15.72px;line-height:18.3px;background:#a9c0e2;border-color:#b7cae6;"></div>
<div class="cell " style="left:190.2px;top:15.67px;width:38.3px;height:15.72px;line-height:18.3px;background:#a9c0e2;border-color:#b7cae6;"></div>
<div class="cell " style="left:228.5px;top:15.67px;width:38.1px;height:15.72px;line-height:18.3px;background:#a9c0e2;border-color:#b7cae6;"></div>
<div class="cell " style="left:266.6px;top:15.67px;width:38.8px;height:15.72px;line-height:18.3px;background:#a9c0e2;border-color:#b7cae6;"></div>
<div class="cell rd" style="left:0.0px;top:31.34px;width:37.4px;height:15.72px;line-height:18.3px;background:#a9c0e2;border-color:#b7cae6;">3.10</div>
<div class="cell " style="left:37.4px;top:31.34px;width:38.2px;height:15.72px;line-height:18.3px;background:#a9c0e2;border-color:#b7cae6;">-31.87</div>
<div class="cell " style="left:75.6px;top:31.34px;width:38.1px;height:15.72px;line-height:18.3px;background:#a9c0e2;border-color:#b7cae6;">-0.06</div>
<div class="cell " style="left:113.7px;top:31.34px;width:38.1px;height:15.72px;line-height:18.3px;background:#a9c0e2;border-color:#b7cae6;">22.77</div>
<div class="cell " style="left:151.8px;top:31.34px;width:38.4px;height:15.72px;line-height:18.3px;background:#a9c0e2;border-color:#b7cae6;"></div>
<div class="cell " style="left:190.2px;top:31.34px;width:38.3px;height:15.72px;line-height:18.3px;background:#a9c0e2;border-color:#b7cae6;"></div>
<div class="cell " style="left:228.5px;top:31.34px;width:38.1px;height:15.72px;line-height:18.3px;background:#a9c0e2;border-color:#b7cae6;"></div>
<div class="cell " style="left:266.6px;top:31.34px;width:38.8px;height:15.72px;line-height:18.3px;background:#a9c0e2;border-color:#b7cae6;"></div>
<div class="cell gr" style="left:0.0px;top:47.01px;width:37.4px;height:15.72px;line-height:18.3px;background:#a9c0e2;border-color:#b7cae6;">1.87</div>
<div class="cell " style="left:37.4px;top:47.01px;width:38.2px;height:15.72px;line-height:18.3px;background:#a9c0e2;border-color:#b7cae6;">-21.12</div>
<div class="cell " style="left:75.6px;top:47.01px;width:38.1px;height:15.72px;line-height:18.3px;background:#a9c0e2;border-color:#b7cae6;">-0.05</div>
<div class="cell " style="left:113.7px;top:47.01px;width:38.1px;height:15.72px;line-height:18.3px;background:#a9c0e2;border-color:#b7cae6;">18.45</div>
<div class="cell " style="left:151.8px;top:47.01px;width:38.4px;height:15.72px;line-height:18.3px;background:#a9c0e2;border-color:#b7cae6;"></div>
<div class="cell " style="left:190.2px;top:47.01px;width:38.3px;height:15.72px;line-height:18.3px;background:#a9c0e2;border-color:#b7cae6;"></div>
<div class="cell " style="left:228.5px;top:47.01px;width:38.1px;height:15.72px;line-height:18.3px;background:#a9c0e2;border-color:#b7cae6;"></div>
<div class="cell " style="left:266.6px;top:47.01px;width:38.8px;height:15.72px;line-height:18.3px;background:#a9c0e2;border-color:#b7cae6;"></div>
<div class="cell rd" style="left:0.0px;top:62.68px;width:37.4px;height:15.72px;line-height:18.3px;background:#c5e6ee;border-color:#d3ecf2;">1.11</div>
<div class="cell " style="left:37.4px;top:62.68px;width:38.2px;height:15.72px;line-height:18.3px;background:#c5e6ee;border-color:#d3ecf2;">-13.43</div>
<div class="cell " style="left:75.6px;top:62.68px;width:38.1px;height:15.72px;line-height:18.3px;background:#c5e6ee;border-color:#d3ecf2;">-0.04</div>
<div class="cell " style="left:113.7px;top:62.68px;width:38.1px;height:15.72px;line-height:18.3px;background:#c5e6ee;border-color:#d3ecf2;">13.80</div>
<div class="cell " style="left:151.8px;top:62.68px;width:38.4px;height:15.72px;line-height:18.3px;background:#c5e6ee;border-color:#d3ecf2;"></div>
<div class="cell " style="left:190.2px;top:62.68px;width:38.3px;height:15.72px;line-height:18.3px;background:#c5e6ee;border-color:#d3ecf2;"></div>
<div class="cell " style="left:228.5px;top:62.68px;width:38.1px;height:15.72px;line-height:18.3px;background:#c5e6ee;border-color:#d3ecf2;"></div>
<div class="cell " style="left:266.6px;top:62.68px;width:38.8px;height:15.72px;line-height:18.3px;background:#c5e6ee;border-color:#d3ecf2;"></div>
<div class="cell gr" style="left:0.0px;top:78.35px;width:37.4px;height:15.72px;line-height:18.3px;background:#c5e6ee;border-color:#d3ecf2;">0.68</div>
<div class="cell " style="left:37.4px;top:78.35px;width:38.2px;height:15.72px;line-height:18.3px;background:#c5e6ee;border-color:#d3ecf2;">-8.53</div>
<div class="cell " style="left:75.6px;top:78.35px;width:38.1px;height:15.72px;line-height:18.3px;background:#c5e6ee;border-color:#d3ecf2;">-0.03</div>
<div class="cell " style="left:113.7px;top:78.35px;width:38.1px;height:15.72px;line-height:18.3px;background:#c5e6ee;border-color:#d3ecf2;">9.95</div>
<div class="cell " style="left:151.8px;top:78.35px;width:38.4px;height:15.72px;line-height:18.3px;background:#c5e6ee;border-color:#d3ecf2;"></div>
<div class="cell " style="left:190.2px;top:78.35px;width:38.3px;height:15.72px;line-height:18.3px;background:#c5e6ee;border-color:#d3ecf2;"></div>
<div class="cell " style="left:228.5px;top:78.35px;width:38.1px;height:15.72px;line-height:18.3px;background:#c5e6ee;border-color:#d3ecf2;"></div>
<div class="cell " style="left:266.6px;top:78.35px;width:38.8px;height:15.72px;line-height:18.3px;background:#c5e6ee;border-color:#d3ecf2;"></div>
<div class="cell rd" style="left:0.0px;top:94.02px;width:37.4px;height:15.72px;line-height:18.3px;background:#c5e6ee;border-color:#d3ecf2;">0.435</div>
<div class="cell " style="left:37.4px;top:94.02px;width:38.2px;height:15.72px;line-height:18.3px;background:#c5e6ee;border-color:#d3ecf2;">-5.49</div>
<div class="cell " style="left:75.6px;top:94.02px;width:38.1px;height:15.72px;line-height:18.3px;background:#c5e6ee;border-color:#d3ecf2;">-0.02</div>
<div class="cell " style="left:113.7px;top:94.02px;width:38.1px;height:15.72px;line-height:18.3px;background:#c5e6ee;border-color:#d3ecf2;">7.09</div>
<div class="cell " style="left:151.8px;top:94.02px;width:38.4px;height:15.72px;line-height:18.3px;background:#c5e6ee;border-color:#d3ecf2;"></div>
<div class="cell " style="left:190.2px;top:94.02px;width:38.3px;height:15.72px;line-height:18.3px;background:#c5e6ee;border-color:#d3ecf2;"></div>
<div class="cell " style="left:228.5px;top:94.02px;width:38.1px;height:15.72px;line-height:18.3px;background:#c5e6ee;border-color:#d3ecf2;"></div>
<div class="cell " style="left:266.6px;top:94.02px;width:38.8px;height:15.72px;line-height:18.3px;background:#c5e6ee;border-color:#d3ecf2;"></div>
<div class="cell rd" style="left:0.0px;top:109.69px;width:37.4px;height:15.72px;line-height:18.3px;background:#f1f8fb;border-color:#e0e8ea;">0.295</div>
<div class="cell " style="left:37.4px;top:109.69px;width:38.2px;height:15.72px;line-height:18.3px;background:#f1f8fb;border-color:#e0e8ea;">-3.67</div>
<div class="cell " style="left:75.6px;top:109.69px;width:38.1px;height:15.72px;line-height:18.3px;background:#f1f8fb;border-color:#e0e8ea;">-0.02</div>
<div class="cell " style="left:113.7px;top:109.69px;width:38.1px;height:15.72px;line-height:18.3px;background:#f1f8fb;border-color:#e0e8ea;">5.13</div>
<div class="cell " style="left:151.8px;top:109.69px;width:38.4px;height:15.72px;line-height:18.3px;background:#f1f8fb;border-color:#e0e8ea;"></div>
<div class="cell " style="left:190.2px;top:109.69px;width:38.3px;height:15.72px;line-height:18.3px;background:#f1f8fb;border-color:#e0e8ea;"></div>
<div class="cell " style="left:228.5px;top:109.69px;width:38.1px;height:15.72px;line-height:18.3px;background:#f1f8fb;border-color:#e0e8ea;"></div>
<div class="cell " style="left:266.6px;top:109.69px;width:38.8px;height:15.72px;line-height:18.3px;background:#f1f8fb;border-color:#e0e8ea;"></div>
<div class="cell rd" style="left:0.0px;top:125.36px;width:37.4px;height:15.72px;line-height:18.3px;background:#ffffff;border-color:#e2e2e2;">0.215</div>
<div class="cell " style="left:37.4px;top:125.36px;width:38.2px;height:15.72px;line-height:18.3px;background:#ffffff;border-color:#e2e2e2;">-2.59</div>
<div class="cell " style="left:75.6px;top:125.36px;width:38.1px;height:15.72px;line-height:18.3px;background:#ffffff;border-color:#e2e2e2;">-0.02</div>
<div class="cell " style="left:113.7px;top:125.36px;width:38.1px;height:15.72px;line-height:18.3px;background:#ffffff;border-color:#e2e2e2;">3.84</div>
<div class="cell " style="left:151.8px;top:125.36px;width:38.4px;height:15.72px;line-height:18.3px;background:#ffffff;border-color:#e2e2e2;"></div>
<div class="cell " style="left:190.2px;top:125.36px;width:38.3px;height:15.72px;line-height:18.3px;background:#ffffff;border-color:#e2e2e2;"></div>
<div class="cell " style="left:228.5px;top:125.36px;width:38.1px;height:15.72px;line-height:18.3px;background:#ffffff;border-color:#e2e2e2;"></div>
<div class="cell " style="left:266.6px;top:125.36px;width:38.8px;height:15.72px;line-height:18.3px;background:#ffffff;border-color:#e2e2e2;"></div>
<div class="cell rd" style="left:0.0px;top:141.03px;width:37.4px;height:15.72px;line-height:18.3px;background:#ffffff;border-color:#e2e2e2;">0.165</div>
<div class="cell " style="left:37.4px;top:141.03px;width:38.2px;height:15.72px;line-height:18.3px;background:#ffffff;border-color:#e2e2e2;">-1.90</div>
<div class="cell " style="left:75.6px;top:141.03px;width:38.1px;height:15.72px;line-height:18.3px;background:#ffffff;border-color:#e2e2e2;">-0.01</div>
<div class="cell " style="left:113.7px;top:141.03px;width:38.1px;height:15.72px;line-height:18.3px;background:#ffffff;border-color:#e2e2e2;">2.96</div>
<div class="cell " style="left:151.8px;top:141.03px;width:38.4px;height:15.72px;line-height:18.3px;background:#ffffff;border-color:#e2e2e2;"></div>
<div class="cell " style="left:190.2px;top:141.03px;width:38.3px;height:15.72px;line-height:18.3px;background:#ffffff;border-color:#e2e2e2;"></div>
<div class="cell " style="left:228.5px;top:141.03px;width:38.1px;height:15.72px;line-height:18.3px;background:#ffffff;border-color:#e2e2e2;"></div>
<div class="cell " style="left:266.6px;top:141.03px;width:38.8px;height:15.72px;line-height:18.3px;background:#ffffff;border-color:#e2e2e2;"></div>
<div class="cell " style="left:0.0px;top:156.70px;width:37.4px;height:15.72px;line-height:18.3px;background:#ffffff;border-color:#e2e2e2;"></div>
<div class="cell " style="left:37.4px;top:156.70px;width:38.2px;height:15.72px;line-height:18.3px;background:#ffffff;border-color:#e2e2e2;"></div>
<div class="cell " style="left:75.6px;top:156.70px;width:38.1px;height:15.72px;line-height:18.3px;background:#ffffff;border-color:#e2e2e2;"></div>
<div class="cell " style="left:113.7px;top:156.70px;width:38.1px;height:15.72px;line-height:18.3px;background:#ffffff;border-color:#e2e2e2;"></div>
<div class="cell " style="left:151.8px;top:156.70px;width:38.4px;height:15.72px;line-height:18.3px;background:#ffffff;border-color:#e2e2e2;"></div>
<div class="cell " style="left:190.2px;top:156.70px;width:38.3px;height:15.72px;line-height:18.3px;background:#ffffff;border-color:#e2e2e2;"></div>
<div class="cell " style="left:228.5px;top:156.70px;width:38.1px;height:15.72px;line-height:18.3px;background:#ffffff;border-color:#e2e2e2;"></div>
<div class="cell " style="left:266.6px;top:156.70px;width:38.8px;height:15.72px;line-height:18.3px;background:#ffffff;border-color:#e2e2e2;"></div>
</div>
<div class="a" style="left:576.2px;top:427.0px;width:14.8px;height:161.0px;background:#dedede"></div>
<div class="a" style="left:576.8px;top:495.5px;width:13.6px;height:18.5px;background:#c3c3c3"></div>
<svg class="a" style="left:579.4px;top:431.0px" width="9" height="6" viewBox="0 0 9 6"><path d="M1.9 4.3L4.3 2L6.7 4.3" fill="none" stroke="#5c5c5c" stroke-width="1.35"/></svg>
<svg class="a" style="left:579.4px;top:578.4px" width="9" height="6" viewBox="0 0 9 6"><path d="M1.9 1.7L4.3 4L6.7 1.7" fill="none" stroke="#5c5c5c" stroke-width="1.35"/></svg>
<div class="a" style="left:-10.0px;top:601.7px;width:103.5px;height:15.0px;background:#fff;border:1px solid #bdbdbd"></div>
<div class="a" style="left:79.2px;top:601.7px;width:14.3px;height:15.0px;background:#e9e9e9;border:1px solid #bdbdbd"></div>
<svg class="a" style="left:82.6px;top:606.4px" width="8" height="6" viewBox="0 0 8 6"><path d="M1.6 1.3L3.9 3.7L6.2 1.3" fill="none" stroke="#555" stroke-width="1.3"/></svg>
<div class="t " style="left:-31.8px;top:604.5px;color:#333;letter-spacing:-0.05px">Combined</div>
<div class="a" style="left:100.6px;top:601.7px;width:66.9px;height:15.0px;background:#fff;border:1px solid #bdbdbd"></div>
<div class="a" style="left:154.2px;top:601.7px;width:13.3px;height:15.0px;background:#e9e9e9;border:1px solid #bdbdbd"></div>
<svg class="a" style="left:157px;top:606.4px" width="8" height="6" viewBox="0 0 8 6"><path d="M1.6 1.3L3.9 3.7L6.2 1.3" fill="none" stroke="#555" stroke-width="1.3"/></svg>
<div class="t " style="left:103.4px;top:604.5px;color:#333">Auto</div>
<div class="a" style="left:474.7px;top:604.2px;width:8.4px;height:8.4px;background:#fff;border:1px solid #b0b0b0"></div>
<div class="t " style="left:486.6px;top:603.6px;letter-spacing:0.17px">Ignore Today's Trades</div>
<div class="a" style="left:-4.0px;top:619.0px;width:596.2px;height:51.0px;border:1px solid #c2c2c2;background:#e4e4e4"></div>
<div class="a" style="left:-4.0px;top:637.3px;width:595.4px;height:32.1px;background:#fff"></div>
<div class="hd" style="left:-3.2px;top:620.5px;width:53.8px;height:16.8px;line-height:17.4px;">Cost</div>
<div class="cell " style="left:-3.2px;top:637.3px;width:53.8px;height:16.2px;line-height:20.4px;background:#fff;border-color:#dedede;padding-right:0.3px;">-888.00</div>
<div class="cell " style="left:-3.2px;top:653.5px;width:53.8px;height:15.9px;line-height:20.1px;background:#fff;border-color:#dedede;padding-right:0.3px;">-1,359.10</div>
<div class="hd" style="left:50.6px;top:620.5px;width:53.8px;height:16.8px;line-height:17.4px;">Curr Cost</div>
<div class="cell " style="left:50.6px;top:637.3px;width:53.8px;height:16.2px;line-height:20.4px;background:#fff;border-color:#dedede;padding-right:0.3px;">1,313.00</div>
<div class="cell " style="left:50.6px;top:653.5px;width:53.8px;height:15.9px;line-height:20.1px;background:#fff;border-color:#dedede;padding-right:0.3px;">1,774.50</div>
<div class="hd" style="left:104.4px;top:620.5px;width:53.9px;height:16.8px;line-height:17.4px;">Commis...</div>
<div class="cell " style="left:104.4px;top:637.3px;width:53.9px;height:16.2px;line-height:20.4px;background:#fff;border-color:#dedede;padding-right:0.3px;">20.00</div>
<div class="cell " style="left:104.4px;top:653.5px;width:53.9px;height:15.9px;line-height:20.1px;background:#fff;border-color:#dedede;padding-right:0.3px;">29.60</div>
<div class="hd" style="left:158.3px;top:620.5px;width:53.6px;height:16.8px;line-height:17.4px;">PnL</div>
<div class="cell gr" style="left:158.3px;top:637.3px;width:53.6px;height:16.2px;line-height:20.4px;background:#fff;border-color:#dedede;padding-right:0.3px;">425.00</div>
<div class="cell gr" style="left:158.3px;top:653.5px;width:53.6px;height:15.9px;line-height:20.1px;background:#fff;border-color:#dedede;padding-right:0.3px;">415.40</div>
<div class="hd" style="left:211.9px;top:620.5px;width:53.9px;height:16.8px;line-height:17.4px;">PnL%</div>
<div class="cell gr" style="left:211.9px;top:637.3px;width:53.9px;height:16.2px;line-height:20.4px;background:#fff;border-color:#dedede;padding-right:0.3px;">63.38%</div>
<div class="cell gr" style="left:211.9px;top:653.5px;width:53.9px;height:15.9px;line-height:20.1px;background:#fff;border-color:#dedede;padding-right:0.3px;">30.56%</div>
<div class="hd" style="left:265.8px;top:620.5px;width:53.4px;height:16.8px;line-height:17.4px;">Delta</div>
<div class="cell " style="left:265.8px;top:637.3px;width:53.4px;height:16.2px;line-height:20.4px;background:#fff;border-color:#dedede;padding-right:0.3px;">57.15</div>
<div class="cell " style="left:265.8px;top:653.5px;width:53.4px;height:15.9px;line-height:20.1px;background:#fff;border-color:#dedede;padding-right:0.3px;">11.43</div>
<div class="hd" style="left:319.2px;top:620.5px;width:54.2px;height:16.8px;line-height:17.4px;">Gamma</div>
<div class="cell " style="left:319.2px;top:637.3px;width:54.2px;height:16.2px;line-height:20.4px;background:#fff;border-color:#dedede;padding-right:0.3px;">5.90</div>
<div class="cell " style="left:319.2px;top:653.5px;width:54.2px;height:15.9px;line-height:20.1px;background:#fff;border-color:#dedede;padding-right:0.3px;">14.78</div>
<div class="hd" style="left:373.4px;top:620.5px;width:53.8px;height:16.8px;line-height:17.4px;">Theta</div>
<div class="cell " style="left:373.4px;top:637.3px;width:53.8px;height:16.2px;line-height:20.4px;background:#ff0000;color:#b40000;border-color:#ff6a6a;padding-right:0.3px;">-22.20</div>
<div class="cell " style="left:373.4px;top:653.5px;width:53.8px;height:15.9px;line-height:20.1px;background:#ff0000;color:#b40000;border-color:#ff6a6a;padding-right:0.3px;">-37.24</div>
<div class="hd" style="left:427.2px;top:620.5px;width:53.5px;height:16.8px;line-height:17.4px;">Vega</div>
<div class="cell " style="left:427.2px;top:637.3px;width:53.5px;height:16.2px;line-height:20.4px;background:#fff;border-color:#dedede;padding-right:0.3px;">51.34</div>
<div class="cell " style="left:427.2px;top:653.5px;width:53.5px;height:15.9px;line-height:20.1px;background:#fff;border-color:#dedede;padding-right:0.3px;">108.36</div>
<div class="hd" style="left:480.7px;top:620.5px;width:53.9px;height:16.8px;line-height:17.4px;">T/D</div>
<div class="cell " style="left:480.7px;top:637.3px;width:53.9px;height:16.2px;line-height:20.4px;background:#fff;border-color:#dedede;padding-right:0.3px;">-0.4</div>
<div class="cell " style="left:480.7px;top:653.5px;width:53.9px;height:15.9px;line-height:20.1px;background:#fff;border-color:#dedede;padding-right:0.3px;">-3.3</div>
<div class="hd" style="left:534.6px;top:620.5px;width:56.8px;height:16.8px;line-height:17.4px;">Plot</div>
<div class="cell " style="left:534.6px;top:637.3px;width:56.8px;height:16.2px;line-height:18.6px;background:#fff;border-color:#dedede;padding-right:0.3px;"></div>
<svg class="a" style="left:558.4px;top:640.5px" width="10" height="10" viewBox="0 0 10 10"><rect x=".5" y=".5" width="8.6" height="8.6" fill="#fff" stroke="#b4b4b4"/><path d="M2 4.8L4 6.9L7.6 2.6" fill="none" stroke="#3a3a3a" stroke-width="1.3"/></svg>
<div class="cell " style="left:534.6px;top:653.5px;width:56.8px;height:15.9px;line-height:18.3px;background:#fff;border-color:#dedede;padding-right:0.3px;"></div>
<svg class="a" style="left:558.4px;top:656.7px" width="10" height="10" viewBox="0 0 10 10"><rect x=".5" y=".5" width="8.6" height="8.6" fill="#fff" stroke="#b4b4b4"/><path d="M2 4.8L4 6.9L7.6 2.6" fill="none" stroke="#3a3a3a" stroke-width="1.3"/></svg>
<div class="a" style="left:0.0px;top:669.6px;width:603.0px;height:3.0px;background:#d6d6d6"></div>
<div class="a" style="left:0.0px;top:672.4px;width:1080.0px;height:2.6px;background:#2e2e2e;z-index:5"></div>
<div class="a" style="left:602.2px;top:137.6px;width:1.0px;height:532.0px;background:#c4c4c4"></div>
<div class="a" style="left:603.0px;top:159.2px;width:477.0px;height:1.0px;background:#c2c2c2"></div>
<div class="a" style="left:602.2px;top:139.6px;width:65.8px;height:21.0px;background:#e6e6e6;border:1px solid #c2c2c2;border-bottom:none"></div>
<div class="t c" style="left:602.2px;top:144.4px;width:64.8px;color:#333;letter-spacing:-0.2px">Risk Chart</div>
<div class="a" style="left:667.0px;top:140.7px;width:67.0px;height:19.0px;background:#eeeeee;border:1px solid #c2c2c2;border-bottom:none"></div>
<div class="t c" style="left:667.0px;top:145.3px;width:66.0px;letter-spacing:-0.15px">Price Chart</div>
<div class="a" style="left:733.0px;top:140.7px;width:105.0px;height:19.0px;background:#eeeeee;border:1px solid #c2c2c2;border-bottom:none"></div>
<div class="t c" style="left:733.0px;top:145.3px;width:104.0px;letter-spacing:-0.15px">Movement Analysis</div>
<div class="a" style="left:837.0px;top:140.7px;width:55.0px;height:19.0px;background:#eeeeee;border:1px solid #c2c2c2;border-bottom:none"></div>
<div class="t c" style="left:837.0px;top:145.3px;width:54.0px;letter-spacing:-0.15px">Volatility</div>
<div class="a" style="left:891.0px;top:140.7px;width:133.0px;height:19.0px;background:#eeeeee;border:1px solid #c2c2c2;border-bottom:none"></div>
<div class="t c" style="left:891.0px;top:145.3px;width:132.0px;letter-spacing:-0.15px">Statistics &amp; Fundamentals</div>
<div class="a" style="left:603.2px;top:160.2px;width:477.0px;height:20.5px;background:#e6e6e6"></div>
<div class="t " style="left:607.3px;top:165.5px;color:#333;letter-spacing:-0.15px">Vol Adjust</div>
<div class="a" style="left:656.2px;top:162.2px;width:44.2px;height:15.6px;background:#fff;border:1px solid #c0c0c0"></div>
<div class="a" style="left:687.1px;top:163.2px;width:12.3px;height:13.6px;background:#e8e8e8;border-left:1px solid #cdcdcd"></div>
<div class="t r" style="left:660.0px;top:165.5px;width:24.0px;color:#333">0</div>
<svg class="a" style="left:689.6px;top:164.2px" width="8" height="12" viewBox="0 0 8 12"><path d="M2.1 4.3L3.9 2.6L5.7 4.3M2.1 7.9L3.9 9.6L5.7 7.9" fill="none" stroke="#5a5a5a" stroke-width="1.2"/></svg>
<div class="t " style="left:982.0px;top:165.5px;color:#333;letter-spacing:-0.1px">Projection</div>
<div class="a" style="left:1029.0px;top:162.2px;width:60.0px;height:15.6px;background:#fff;border:1px solid #c0c0c0"></div>
<div class="t " style="left:1031.6px;top:165.5px;color:#333;letter-spacing:0">22/01/2024</div>
<div class="a" style="left:603.2px;top:180.8px;width:477.0px;height:468.4px;background:#fff"></div>
<div class="a" style="left:603.2px;top:648.9px;width:477.0px;height:19.9px;background:#303030"></div>
<div class="a" style="left:603.2px;top:668.8px;width:477.0px;height:3.8px;background:linear-gradient(#c4c4c4,#ececec 45%,#b4b4b4)"></div>
<div class="t " style="left:1036.0px;top:654.4px;color:#e8e8e8;font-size:10.5px;letter-spacing:0">100%</div>
<div class="a" style="left:1070.2px;top:658.6px;width:5.0px;height:1.2px;background:#d8d8d8"></div>
<svg class="a" style="left:603px;top:181px" width="477" height="468" viewBox="0 0 477 468" font-family="Liberation Sans,sans-serif">
<g stroke="#dedede" stroke-width="1">
<path d="M81.4 15.2V290.0"/>
<path d="M123.3 15.2V290.0"/>
<path d="M165.2 15.2V290.0"/>
<path d="M207.1 15.2V290.0"/>
<path d="M249.0 15.2V290.0"/>
<path d="M290.9 15.2V290.0"/>
<path d="M332.8 15.2V290.0"/>
<path d="M374.7 15.2V290.0"/>
<path d="M416.6 15.2V290.0"/>
<path d="M458.5 15.2V290.0"/>
<path d="M47.4 15.9H477"/>
<path d="M47.4 33.1H477"/>
<path d="M47.4 50.0H477"/>
<path d="M47.4 67.2H477"/>
<path d="M47.4 84.4H477"/>
<path d="M47.4 101.4H477"/>
<path d="M47.4 118.5H477"/>
<path d="M47.4 135.5H477"/>
<path d="M47.4 152.7H477"/>
<path d="M47.4 169.7H477"/>
<path d="M47.4 186.8H477"/>
<path d="M47.4 203.9H477"/>
<path d="M47.4 255.2H477"/>
<path d="M47.4 272.3H477"/>
<path d="M47.4 289.3H477"/>
</g>
<path d="M47.4 15.2V293.0" stroke="#bdbdbd" stroke-width="1"/>
<path d="M44.4 290.0H477" stroke="#d6d6d6" stroke-width="1"/>
<rect x="220.3" y="15.2" width="83.5" height="274.8" fill="#92cddc"/>
<rect x="241.2" y="15.2" width="41.7" height="274.8" fill="#4f81bd"/>
<g stroke="#e6e6e6" stroke-opacity=".6" stroke-width="1">
<path d="M249.0 15.2V290.0"/>
<path d="M290.9 15.2V290.0"/>
<path d="M220.3 15.9H303.8"/>
<path d="M220.3 33.1H303.8"/>
<path d="M220.3 50.0H303.8"/>
<path d="M220.3 67.2H303.8"/>
<path d="M220.3 84.4H303.8"/>
<path d="M220.3 101.4H303.8"/>
<path d="M220.3 118.5H303.8"/>
<path d="M220.3 135.5H303.8"/>
<path d="M220.3 152.7H303.8"/>
<path d="M220.3 169.7H303.8"/>
<path d="M220.3 186.8H303.8"/>
<path d="M220.3 203.9H303.8"/>
<path d="M220.3 255.2H303.8"/>
<path d="M220.3 272.3H303.8"/>
<path d="M220.3 289.3H303.8"/>
</g>
<text transform="translate(229.4 45.0) rotate(-90) scale(0.89 1)" fill="#5b9bb8" font-size="9.7">186.58</text>
<text transform="translate(250.7 45.0) rotate(-90) scale(0.89 1)" fill="#86a9d8" font-size="9.7">189.07</text>
<text transform="translate(281.4 45.0) rotate(-90) scale(0.89 1)" fill="#86a9d8" font-size="9.7">194.05</text>
<text transform="translate(303.0 45.0) rotate(-90) scale(0.89 1)" fill="#5b9bb8" font-size="9.7">196.54</text>
<path d="M47.4 220.4H477" stroke="#3a3a3a" stroke-width="1.1"/>
<path d="M47.4 236.3H477" stroke="#cfcfcf" stroke-width=".7" stroke-dasharray="2.4 1.4"/>
<path d="M50.8 15.2V290.0" stroke="#b4b4b4" stroke-width=".6" stroke-dasharray="2.2 1.4"/>
<path d="M233.6 16.4V290.0" stroke="#a23cab" stroke-width="1.1" stroke-dasharray="3 3.7"/>
<text transform="translate(232.4 287.0) rotate(-90) scale(0.89 1)" fill="#9c2fa6" font-size="9.7">188.16</text>
<path d="M384.4 16.4V290.0" stroke="#a23cab" stroke-width="1.1" stroke-dasharray="3 3.7"/>
<text transform="translate(383.2 287.0) rotate(-90) scale(0.89 1)" fill="#9c2fa6" font-size="9.7">206.16</text>
<text transform="translate(296.6 281.9) scale(0.89 1)" text-anchor="start" fill="#a23cab" font-size="9.7">41.8%</text>
<text transform="translate(447.6 281.9) scale(0.89 1)" text-anchor="start" fill="#a23cab" font-size="9.7">25.9%</text>
<text transform="translate(128.0 282.4) scale(0.89 1)" text-anchor="start" fill="#a23cab" font-size="9.7">32.3%</text>
<polygon points="265.9,208.4 289.4,204.7 289.4,210.0 265.9,213.8" fill="#dba58e" fill-opacity=".85"/>
<path d="M47.4 115.3C50.6 118.8 60.2 129.3 66.6 136.0C73.0 142.7 79.7 149.9 85.9 155.3C92.1 160.7 97.5 164.2 103.7 168.6C109.9 173.1 116.7 178.2 122.9 182.0C129.1 185.8 135.0 188.9 140.7 191.6C146.4 194.3 150.9 196.1 157.0 198.3C163.1 200.5 170.9 202.7 177.6 204.6C184.3 206.5 190.1 208.4 197.0 209.8C203.9 211.2 213.0 212.4 219.2 213.1C225.4 213.8 229.0 213.8 234.0 213.8C239.0 213.8 243.9 213.6 248.9 213.1C253.9 212.6 258.8 211.6 263.7 210.9C268.6 210.1 273.6 209.4 278.5 208.6C283.4 207.9 288.5 207.0 292.9 206.4C297.3 205.8 300.5 205.4 304.8 204.8C309.1 204.2 314.9 203.3 318.7 202.5C322.6 201.7 324.0 201.5 327.9 200.2C331.8 198.9 337.2 196.5 341.8 194.6C346.4 192.7 351.1 190.6 355.7 188.6C360.3 186.6 366.1 184.1 369.6 182.6C373.1 181.1 368.5 182.7 377.0 179.4C385.5 176.1 404.0 169.2 420.7 162.6C437.4 156.0 467.6 143.4 477.0 139.6" fill="none" stroke="#3fe03f" stroke-width="1.15" stroke-opacity="1"/>
<path d="M47.4 73.4C55.5 79.3 81.4 97.8 96.3 109.0C111.2 120.2 125.2 131.4 137.0 140.5C148.8 149.6 159.2 157.7 167.0 163.6C174.8 169.5 178.7 173.1 183.7 176.0C188.7 178.9 191.1 178.5 197.0 181.2C202.9 183.9 211.8 189.1 219.2 192.3C226.6 195.5 234.0 198.4 241.4 200.5C248.8 202.6 256.8 203.9 263.7 204.9C270.6 205.9 278.0 206.1 282.9 206.4C287.8 206.6 289.2 207.0 292.9 206.4C296.5 205.8 300.5 204.3 304.8 203.0C309.1 201.7 314.1 200.2 318.7 198.8C323.3 197.4 328.0 196.1 332.6 194.6C337.2 193.1 341.8 191.6 346.4 190.0C351.0 188.4 355.2 187.1 360.3 184.9C365.4 182.7 370.9 180.0 377.0 176.6C383.1 173.2 390.5 168.8 397.0 164.4C403.5 160.0 407.4 158.1 416.3 150.5C425.2 142.9 440.2 128.6 450.3 118.6C460.4 108.6 472.5 95.2 477.0 90.5" fill="none" stroke="#3fe03f" stroke-width="1.15" stroke-opacity="1"/>
<path d="M47.4 130.9C50.6 134.7 60.9 147.5 66.6 153.8C72.3 160.1 76.5 163.8 81.4 168.6C86.3 173.4 90.6 177.8 96.3 182.7C102.0 187.6 109.4 193.8 115.5 198.3C121.6 202.9 126.9 206.3 133.0 210.0C139.1 213.7 143.9 217.5 152.3 220.7C160.7 223.9 175.8 227.5 183.3 229.4C190.8 231.3 192.2 231.4 197.0 232.0C201.8 232.6 206.9 233.0 211.8 233.1C216.7 233.2 220.4 233.0 226.6 232.4C232.8 231.8 242.0 230.5 248.9 229.4C255.8 228.3 261.1 227.5 268.1 225.7C275.1 223.9 284.8 220.3 290.9 218.3C297.0 216.3 299.4 215.6 304.8 213.6C310.2 211.6 317.1 208.8 323.3 206.2C329.5 203.6 335.6 200.6 341.8 197.9C348.0 195.2 354.4 192.4 360.3 190.0C366.2 187.6 366.9 187.7 377.0 183.3C387.1 178.9 404.0 170.9 420.7 163.8C437.4 156.7 467.6 144.6 477.0 140.8" fill="none" stroke="#f07878" stroke-width="1.15" stroke-opacity="1"/>
<path d="M47.4 71.2C55.5 77.5 81.4 97.1 96.3 108.8C111.2 120.5 125.2 132.1 137.0 141.5C148.8 150.9 159.2 159.3 167.0 165.5C174.8 171.7 178.7 174.6 183.7 178.5C188.7 182.4 191.1 184.7 197.0 188.6C202.9 192.5 211.8 197.6 219.2 202.0C226.6 206.4 233.2 211.4 241.4 215.3C249.5 219.2 260.2 223.3 268.1 225.7C276.0 228.1 283.5 229.1 288.9 229.8C294.3 230.5 296.3 230.3 300.7 230.1C305.1 229.9 310.6 229.5 315.5 228.6C320.4 227.7 325.1 226.6 330.3 224.9C335.4 223.2 341.4 220.6 346.4 218.3C351.4 216.0 355.2 213.9 360.3 210.9C365.4 207.9 371.9 203.8 377.0 200.2C382.1 196.6 383.8 195.4 391.1 189.0C398.4 182.6 410.8 171.6 420.7 161.6C430.6 151.6 440.9 139.0 450.3 129.0C459.7 119.0 472.5 106.2 477.0 101.6" fill="none" stroke="#f07878" stroke-width="1.15" stroke-opacity="1"/>
<polyline points="47.4,144.9 81.4,199.0 123.3,250.7 249.0,250.7 291.0,233.7 333.0,199.0 477.0,140.2" fill="none" stroke="#4a4ac8" stroke-width="1.35" stroke-linejoin="round"/>
<polyline points="47.4,68.3 290.6,266.6 332.6,266.6 374.5,233.1 477.0,106.8" fill="none" stroke="#1c861c" stroke-width="1.45" stroke-linejoin="round"/>
<circle cx="293.2" cy="206.5" r="2.7" fill="#00e8f4" stroke="#006a70" stroke-width=".9"/>
<text transform="translate(41.6 18.7) scale(0.86 1)" text-anchor="end" fill="#2a2a2a" font-size="9.7">895%</text>
<text transform="translate(41.6 35.9) scale(0.86 1)" text-anchor="end" fill="#2a2a2a" font-size="9.7">820%</text>
<text transform="translate(41.6 52.9) scale(0.86 1)" text-anchor="end" fill="#2a2a2a" font-size="9.7">746%</text>
<text transform="translate(41.6 70.1) scale(0.86 1)" text-anchor="end" fill="#2a2a2a" font-size="9.7">671%</text>
<text transform="translate(41.6 87.2) scale(0.86 1)" text-anchor="end" fill="#2a2a2a" font-size="9.7">596%</text>
<text transform="translate(41.6 104.2) scale(0.86 1)" text-anchor="end" fill="#2a2a2a" font-size="9.7">522%</text>
<text transform="translate(41.6 121.4) scale(0.86 1)" text-anchor="end" fill="#2a2a2a" font-size="9.7">447%</text>
<text transform="translate(41.6 138.4) scale(0.86 1)" text-anchor="end" fill="#2a2a2a" font-size="9.7">373%</text>
<text transform="translate(41.6 155.5) scale(0.86 1)" text-anchor="end" fill="#2a2a2a" font-size="9.7">298%</text>
<text transform="translate(41.6 172.5) scale(0.86 1)" text-anchor="end" fill="#2a2a2a" font-size="9.7">224%</text>
<text transform="translate(41.6 189.7) scale(0.86 1)" text-anchor="end" fill="#2a2a2a" font-size="9.7">149%</text>
<text transform="translate(41.6 223.8) scale(0.86 1)" text-anchor="end" fill="#2a2a2a" font-size="9.7">0%</text>
<text transform="translate(41.6 258.0) scale(0.86 1)" text-anchor="end" fill="#2a2a2a" font-size="9.7">-149%</text>
<text transform="translate(41.6 275.2) scale(0.86 1)" text-anchor="end" fill="#2a2a2a" font-size="9.7">-224%</text>
<text transform="translate(41.6 292.1) scale(0.86 1)" text-anchor="end" fill="#2a2a2a" font-size="9.7">-298%</text>
<rect x="5.1" y="199.9" width="38.7" height="11" fill="#068a06"/>
<text transform="translate(41.2 209.7) scale(0.86 1)" text-anchor="end" fill="#fff" font-size="9.7">62%</text>
<text transform="translate(41.6 241.8) scale(0.86 1)" text-anchor="end" fill="#2a2a2a" font-size="9.7">-75%</text>
<rect x="5.5" y="230.3" width="38" height="9.9" fill="#fff" stroke="#6f7f9c" stroke-width=".9"/>
<text transform="translate(41.2 240.4) scale(0.86 1)" text-anchor="end" fill="#2a2a2a" font-size="9.7">-67%</text>
<text transform="translate(81.4 10.1) scale(0.89 1)" text-anchor="middle" fill="#2a2a2a" font-size="9.7">-11.3%</text>
<text transform="translate(123.3 10.1) scale(0.89 1)" text-anchor="middle" fill="#2a2a2a" font-size="9.7">-8.6%</text>
<text transform="translate(165.2 10.1) scale(0.89 1)" text-anchor="middle" fill="#2a2a2a" font-size="9.7">-6.0%</text>
<text transform="translate(207.1 10.1) scale(0.89 1)" text-anchor="middle" fill="#2a2a2a" font-size="9.7">-3.4%</text>
<text transform="translate(249.0 10.1) scale(0.89 1)" text-anchor="middle" fill="#2a2a2a" font-size="9.7">-0.8%</text>
<text transform="translate(332.8 10.1) scale(0.89 1)" text-anchor="middle" fill="#2a2a2a" font-size="9.7">4.4%</text>
<text transform="translate(374.7 10.1) scale(0.89 1)" text-anchor="middle" fill="#2a2a2a" font-size="9.7">7.0%</text>
<text transform="translate(416.6 10.1) scale(0.89 1)" text-anchor="middle" fill="#2a2a2a" font-size="9.7">9.6%</text>
<text transform="translate(458.5 10.1) scale(0.89 1)" text-anchor="middle" fill="#2a2a2a" font-size="9.7">12.2%</text>
<rect x="34.6" y="0.4" width="31.6" height="10.2" fill="#fff" stroke="#6d7b98" stroke-width=".8"/>
<text transform="translate(50.4 9.9) scale(0.89 1)" text-anchor="middle" fill="#2a2a2a" font-size="9.7">-13.2%</text>
<rect x="281.2" y="0.4" width="23.4" height="10.2" fill="#eef2fa" stroke="#6d7b98" stroke-width=".8"/>
<text transform="translate(293.0 9.9) scale(0.89 1)" text-anchor="middle" fill="#2a2a2a" font-size="9.7">1.9%</text>
<text transform="translate(81.4 301.8) scale(0.89 1)" text-anchor="middle" fill="#2a2a2a" font-size="9.7">170</text>
<text transform="translate(123.3 301.8) scale(0.89 1)" text-anchor="middle" fill="#2a2a2a" font-size="9.7">175</text>
<text transform="translate(165.2 301.8) scale(0.89 1)" text-anchor="middle" fill="#2a2a2a" font-size="9.7">180</text>
<text transform="translate(207.1 301.8) scale(0.89 1)" text-anchor="middle" fill="#2a2a2a" font-size="9.7">185</text>
<text transform="translate(249.0 301.8) scale(0.89 1)" text-anchor="middle" fill="#2a2a2a" font-size="9.7">190</text>
<text transform="translate(332.8 301.8) scale(0.89 1)" text-anchor="middle" fill="#2a2a2a" font-size="9.7">200</text>
<text transform="translate(374.7 301.8) scale(0.89 1)" text-anchor="middle" fill="#2a2a2a" font-size="9.7">205</text>
<text transform="translate(416.6 301.8) scale(0.89 1)" text-anchor="middle" fill="#2a2a2a" font-size="9.7">210</text>
<text transform="translate(458.5 301.8) scale(0.89 1)" text-anchor="middle" fill="#2a2a2a" font-size="9.7">215</text>
<rect x="51.4" y="20.2" width="132.3" height="161.6" rx="3.2" fill="#ebf1fb" fill-opacity=".72" stroke="#93a3bd" stroke-width=".9"/>
<rect x="57.7" y="26.7" width="2.5" height="10.4" fill="#a8eba8"/>
<text x="61.2" y="35.7" textLength="81.0" lengthAdjust="spacingAndGlyphs" text-anchor="start" fill="#555" font-size="9.7">144.00 Realized PnL</text>
<rect x="57.7" y="38.3" width="2.5" height="11.4" fill="#34c24a"/>
<text transform="translate(61.2 47.3) scale(0.92 1)" text-anchor="start" fill="#4a4a4a" font-size="9.7">+2</text>
<text x="73.6" y="47.3" textLength="67.3" lengthAdjust="spacingAndGlyphs" text-anchor="start" fill="#5858f0" font-size="9.7">23feb. 195 Put Δ</text>
<text transform="translate(175.2 47.3) scale(0.87 1)" text-anchor="end" fill="#5858f0" font-size="9.7">-45.54</text>
<rect x="57.7" y="49.8" width="2.5" height="11.4" fill="#34c24a"/>
<text transform="translate(61.2 58.8) scale(0.92 1)" text-anchor="start" fill="#4a4a4a" font-size="9.7">-3</text>
<text x="70.8" y="58.8" textLength="67.3" lengthAdjust="spacingAndGlyphs" text-anchor="start" fill="#f26464" font-size="9.7">23feb. 175 Put Δ</text>
<text transform="translate(172.1 58.8) scale(0.87 1)" text-anchor="end" fill="#f26464" font-size="9.7">-7.47</text>
<rect x="57.7" y="61.4" width="2.5" height="11.4" fill="#34c24a"/>
<text transform="translate(61.2 70.4) scale(0.92 1)" text-anchor="start" fill="#4a4a4a" font-size="9.7">-1</text>
<text x="70.8" y="70.4" textLength="67.3" lengthAdjust="spacingAndGlyphs" text-anchor="start" fill="#f26464" font-size="9.7">23feb. 170 Put Δ</text>
<text transform="translate(172.6 70.4) scale(0.87 1)" text-anchor="end" fill="#f26464" font-size="9.7">-4.73</text>
<rect x="57.7" y="72.9" width="2.5" height="11.4" fill="#34c24a"/>
<text transform="translate(61.2 81.9) scale(0.92 1)" text-anchor="start" fill="#4a4a4a" font-size="9.7">-1</text>
<text x="70.8" y="81.9" textLength="68.9" lengthAdjust="spacingAndGlyphs" text-anchor="start" fill="#f26464" font-size="9.7">23feb. 190 Call Δ</text>
<text transform="translate(174.0 81.9) scale(0.87 1)" text-anchor="end" fill="#f26464" font-size="9.7">68.66</text>
<rect x="57.7" y="84.4" width="2.5" height="11.4" fill="#34c24a"/>
<text transform="translate(61.2 93.5) scale(0.92 1)" text-anchor="start" fill="#4a4a4a" font-size="9.7">-1</text>
<text x="70.8" y="93.5" textLength="68.9" lengthAdjust="spacingAndGlyphs" text-anchor="start" fill="#f26464" font-size="9.7">23feb. 195 Call Δ</text>
<text transform="translate(173.6 93.5) scale(0.87 1)" text-anchor="end" fill="#f26464" font-size="9.7">54.44</text>
<rect x="57.7" y="96.0" width="2.5" height="11.4" fill="#34c24a"/>
<text transform="translate(61.2 105.0) scale(0.92 1)" text-anchor="start" fill="#4a4a4a" font-size="9.7">+3</text>
<text x="73.6" y="105.0" textLength="68.9" lengthAdjust="spacingAndGlyphs" text-anchor="start" fill="#5858f0" font-size="9.7">23feb. 200 Call Δ</text>
<text transform="translate(176.3 105.0) scale(0.87 1)" text-anchor="end" fill="#5858f0" font-size="9.7">38.87</text>
<rect x="57.7" y="107.6" width="2.5" height="11.4" fill="#34c24a"/>
<text transform="translate(61.2 116.6) scale(0.92 1)" text-anchor="start" fill="#4a4a4a" font-size="9.7">+1</text>
<text x="73.6" y="116.6" textLength="68.9" lengthAdjust="spacingAndGlyphs" text-anchor="start" fill="#5858f0" font-size="9.7">23feb. 205 Call Δ</text>
<text transform="translate(176.3 116.6) scale(0.87 1)" text-anchor="end" fill="#5858f0" font-size="9.7">24.72</text>
<rect x="57.7" y="119.1" width="2.5" height="11.4" fill="#6f9cec"/>
<text transform="translate(61.2 128.1) scale(0.92 1)" text-anchor="start" fill="#4a4a4a" font-size="9.7">+1</text>
<text x="73.6" y="128.1" textLength="68.9" lengthAdjust="spacingAndGlyphs" text-anchor="start" fill="#5858f0" font-size="9.7">23feb. 190 Call Δ</text>
<text transform="translate(176.4 128.1) scale(0.87 1)" text-anchor="end" fill="#5858f0" font-size="9.7">68.66</text>
<rect x="57.7" y="130.6" width="2.5" height="11.4" fill="#6f9cec"/>
<text transform="translate(61.2 139.7) scale(0.92 1)" text-anchor="start" fill="#4a4a4a" font-size="9.7">+1</text>
<text x="73.6" y="139.7" textLength="67.3" lengthAdjust="spacingAndGlyphs" text-anchor="start" fill="#5858f0" font-size="9.7">23feb. 170 Put Δ</text>
<text transform="translate(175.0 139.7) scale(0.87 1)" text-anchor="end" fill="#5858f0" font-size="9.7">-4.73</text>
<rect x="57.7" y="142.2" width="2.5" height="11.4" fill="#6f9cec"/>
<text transform="translate(61.2 151.2) scale(0.92 1)" text-anchor="start" fill="#4a4a4a" font-size="9.7">+3</text>
<text x="73.6" y="151.2" textLength="67.3" lengthAdjust="spacingAndGlyphs" text-anchor="start" fill="#5858f0" font-size="9.7">23feb. 175 Put Δ</text>
<text transform="translate(174.5 151.2) scale(0.87 1)" text-anchor="end" fill="#5858f0" font-size="9.7">-7.47</text>
<rect x="57.7" y="153.8" width="2.5" height="11.4" fill="#6f9cec"/>
<text transform="translate(61.2 162.8) scale(0.92 1)" text-anchor="start" fill="#4a4a4a" font-size="9.7">-1</text>
<text x="70.8" y="162.8" textLength="68.9" lengthAdjust="spacingAndGlyphs" text-anchor="start" fill="#f26464" font-size="9.7">23feb. 200 Call Δ</text>
<text transform="translate(173.5 162.8) scale(0.87 1)" text-anchor="end" fill="#f26464" font-size="9.7">38.87</text>
<rect x="57.7" y="165.3" width="2.5" height="11.4" fill="#6f9cec"/>
<text transform="translate(61.2 174.3) scale(0.92 1)" text-anchor="start" fill="#4a4a4a" font-size="9.7">+1</text>
<text x="73.6" y="174.3" textLength="68.9" lengthAdjust="spacingAndGlyphs" text-anchor="start" fill="#5858f0" font-size="9.7">23feb. 195 Call Δ</text>
<text transform="translate(176.0 174.3) scale(0.87 1)" text-anchor="end" fill="#5858f0" font-size="9.7">54.44</text>
<rect x="51.7" y="239.5" width="157.6" height="45.4" rx="3.2" fill="#ebf1fb" fill-opacity=".86" stroke="#93a3bd" stroke-width=".9"/>
<text transform="translate(57.8 254.4) scale(0.89 1)" text-anchor="start" fill="#3a8c3a" font-size="9.7">23/02/2024 (0)</text>
<text transform="translate(202.9 254.4) scale(0.89 1)" text-anchor="end" fill="#3a8c3a" font-size="9.7">4,363.52</text>
<text transform="translate(57.8 266.4) scale(0.89 1)" text-anchor="start" fill="#f05a5a" font-size="9.7">07/02/2024 (16) T+16</text>
<text transform="translate(202.9 266.4) scale(0.89 1)" text-anchor="end" fill="#f05a5a" font-size="9.7">4,290.52</text>
<text transform="translate(57.8 277.7) scale(0.89 1)" text-anchor="start" fill="#48c848" font-size="9.7">22/01/2024 (32) T+0</text>
<text transform="translate(202.9 277.7) scale(0.89 1)" text-anchor="end" fill="#48c848" font-size="9.7">4,222.64</text>
<rect x="3.2" y="307.6" width="480" height="156.8" rx="4" fill="#e8eff8" stroke="#a9b8cf" stroke-width=".9"/>
<text transform="translate(17.6 335.2) scale(0.9 1)" text-anchor="start" fill="#8c8c8c" font-size="10.2">Pnl</text>
<rect x="71.0" y="324.5" width="31.4" height="6.9" fill="#5478f4" stroke="#454c78" stroke-width=".8"/>
<text transform="translate(81.4 339.4) scale(0.89 1)" text-anchor="middle" fill="#6a6af2" font-size="9.7">3512</text>
<text transform="translate(81.4 347.8) scale(0.89 1)" text-anchor="middle" fill="#6a6af2" font-size="9.7">524%</text>
<rect x="102.4" y="326.2" width="41.9" height="5.2" fill="#5478f4" stroke="#454c78" stroke-width=".8"/>
<text transform="translate(123.3 339.4) scale(0.89 1)" text-anchor="middle" fill="#6a6af2" font-size="9.7">2570</text>
<text transform="translate(123.3 347.8) scale(0.89 1)" text-anchor="middle" fill="#6a6af2" font-size="9.7">383%</text>
<rect x="144.2" y="327.8" width="41.9" height="3.6" fill="#5478f4" stroke="#454c78" stroke-width=".8"/>
<text transform="translate(165.2 339.4) scale(0.89 1)" text-anchor="middle" fill="#6a6af2" font-size="9.7">1714</text>
<text transform="translate(165.2 347.8) scale(0.89 1)" text-anchor="middle" fill="#6a6af2" font-size="9.7">256%</text>
<rect x="186.1" y="329.1" width="41.9" height="2.3" fill="#5478f4" stroke="#454c78" stroke-width=".8"/>
<text transform="translate(207.1 339.4) scale(0.89 1)" text-anchor="middle" fill="#6a6af2" font-size="9.7">1012</text>
<text transform="translate(207.1 347.8) scale(0.89 1)" text-anchor="middle" fill="#6a6af2" font-size="9.7">151%</text>
<rect x="228.0" y="329.9" width="41.9" height="1.5" fill="#5478f4" stroke="#454c78" stroke-width=".8"/>
<text transform="translate(249.0 339.4) scale(0.89 1)" text-anchor="middle" fill="#6a6af2" font-size="9.7">553</text>
<text transform="translate(249.0 347.8) scale(0.89 1)" text-anchor="middle" fill="#6a6af2" font-size="9.7">82%</text>
<rect x="270.0" y="330.1" width="41.9" height="1.3" fill="#5478f4" stroke="#454c78" stroke-width=".8"/>
<rect x="311.9" y="329.7" width="41.9" height="1.7" fill="#5478f4" stroke="#454c78" stroke-width=".8"/>
<text transform="translate(332.8 339.4) scale(0.89 1)" text-anchor="middle" fill="#6a6af2" font-size="9.7">637</text>
<text transform="translate(332.8 347.8) scale(0.89 1)" text-anchor="middle" fill="#6a6af2" font-size="9.7">95%</text>
<rect x="353.8" y="328.7" width="41.9" height="2.7" fill="#5478f4" stroke="#454c78" stroke-width=".8"/>
<text transform="translate(374.7 339.4) scale(0.89 1)" text-anchor="middle" fill="#6a6af2" font-size="9.7">1222</text>
<text transform="translate(374.7 347.8) scale(0.89 1)" text-anchor="middle" fill="#6a6af2" font-size="9.7">182%</text>
<rect x="395.6" y="327.0" width="41.9" height="4.4" fill="#5478f4" stroke="#454c78" stroke-width=".8"/>
<text transform="translate(416.6 339.4) scale(0.89 1)" text-anchor="middle" fill="#6a6af2" font-size="9.7">2120</text>
<text transform="translate(416.6 347.8) scale(0.89 1)" text-anchor="middle" fill="#6a6af2" font-size="9.7">316%</text>
<rect x="437.5" y="325.0" width="41.9" height="6.4" fill="#5478f4" stroke="#454c78" stroke-width=".8"/>
<text transform="translate(458.5 339.4) scale(0.89 1)" text-anchor="middle" fill="#6a6af2" font-size="9.7">3257</text>
<text transform="translate(458.5 347.8) scale(0.89 1)" text-anchor="middle" fill="#6a6af2" font-size="9.7">486%</text>
<path d="M674 330.9H477" stroke="#4a4a5a" stroke-width=".0"/>
<text transform="translate(14.6 371.6) scale(0.9 1)" text-anchor="start" fill="#8c8c8c" font-size="10.2">Delta</text>
<rect x="71.0" y="366.8" width="31.4" height="6.3" fill="#f0747a" stroke="#9a5a60" stroke-width=".7"/>
<text transform="translate(81.4 366.7) scale(0.89 1)" text-anchor="middle" fill="#f26464" font-size="9.7">-193.26</text>
<rect x="102.4" y="366.8" width="41.9" height="6.0" fill="#f0747a" stroke="#9a5a60" stroke-width=".7"/>
<text transform="translate(123.3 366.7) scale(0.89 1)" text-anchor="middle" fill="#f26464" font-size="9.7">-181.81</text>
<rect x="144.2" y="366.8" width="41.9" height="5.3" fill="#f0747a" stroke="#9a5a60" stroke-width=".7"/>
<text transform="translate(165.2 366.7) scale(0.89 1)" text-anchor="middle" fill="#f26464" font-size="9.7">-158.53</text>
<rect x="186.1" y="366.8" width="41.9" height="4.1" fill="#f0747a" stroke="#9a5a60" stroke-width=".7"/>
<text transform="translate(207.1 366.7) scale(0.89 1)" text-anchor="middle" fill="#f26464" font-size="9.7">-118.98</text>
<rect x="228.0" y="366.8" width="41.9" height="2.4" fill="#f0747a" stroke="#9a5a60" stroke-width=".7"/>
<text transform="translate(249.0 366.7) scale(0.89 1)" text-anchor="middle" fill="#f26464" font-size="9.7">-62.13</text>
<rect x="270.0" y="367.1" width="41.9" height="0.7" fill="#5478f4" stroke="#454c78" stroke-width=".8"/>
<rect x="311.9" y="364.8" width="41.9" height="3.0" fill="#5478f4" stroke="#454c78" stroke-width=".8"/>
<text transform="translate(332.8 375.5) scale(0.89 1)" text-anchor="middle" fill="#6a6af2" font-size="9.7">81.89</text>
<rect x="353.8" y="362.8" width="41.9" height="5.0" fill="#5478f4" stroke="#454c78" stroke-width=".8"/>
<text transform="translate(374.7 375.5) scale(0.89 1)" text-anchor="middle" fill="#6a6af2" font-size="9.7">150.44</text>
<rect x="395.6" y="361.1" width="41.9" height="6.7" fill="#5478f4" stroke="#454c78" stroke-width=".8"/>
<text transform="translate(416.6 375.5) scale(0.89 1)" text-anchor="middle" fill="#6a6af2" font-size="9.7">206.09</text>
<rect x="437.5" y="359.9" width="41.9" height="7.9" fill="#5478f4" stroke="#454c78" stroke-width=".8"/>
<text transform="translate(458.5 375.5) scale(0.89 1)" text-anchor="middle" fill="#6a6af2" font-size="9.7">246.05</text>
<path d="M674 367.3H477" stroke="#4a4a5a" stroke-width=".0"/>
<text transform="translate(10.2 398.2) scale(0.9 1)" text-anchor="start" fill="#8c8c8c" font-size="10.2">Gamma</text>
<rect x="71.0" y="393.1" width="31.4" height="1.3" fill="#5478f4" stroke="#454c78" stroke-width=".8"/>
<text transform="translate(81.4 402.1) scale(0.89 1)" text-anchor="middle" fill="#6a6af2" font-size="9.7">1.46</text>
<rect x="102.4" y="392.1" width="41.9" height="2.3" fill="#5478f4" stroke="#454c78" stroke-width=".8"/>
<text transform="translate(123.3 402.1) scale(0.89 1)" text-anchor="middle" fill="#6a6af2" font-size="9.7">3.30</text>
<rect x="144.2" y="390.5" width="41.9" height="3.9" fill="#5478f4" stroke="#454c78" stroke-width=".8"/>
<text transform="translate(165.2 402.1) scale(0.89 1)" text-anchor="middle" fill="#6a6af2" font-size="9.7">6.17</text>
<rect x="186.1" y="388.5" width="41.9" height="5.9" fill="#5478f4" stroke="#454c78" stroke-width=".8"/>
<text transform="translate(207.1 402.1) scale(0.89 1)" text-anchor="middle" fill="#6a6af2" font-size="9.7">9.69</text>
<rect x="228.0" y="386.7" width="41.9" height="7.7" fill="#5478f4" stroke="#454c78" stroke-width=".8"/>
<text transform="translate(249.0 402.1) scale(0.89 1)" text-anchor="middle" fill="#6a6af2" font-size="9.7">12.90</text>
<rect x="270.0" y="385.7" width="41.9" height="8.7" fill="#5478f4" stroke="#454c78" stroke-width=".8"/>
<rect x="311.9" y="385.8" width="41.9" height="8.6" fill="#5478f4" stroke="#454c78" stroke-width=".8"/>
<text transform="translate(332.8 402.1) scale(0.89 1)" text-anchor="middle" fill="#6a6af2" font-size="9.7">14.58</text>
<rect x="353.8" y="386.9" width="41.9" height="7.5" fill="#5478f4" stroke="#454c78" stroke-width=".8"/>
<text transform="translate(374.7 402.1) scale(0.89 1)" text-anchor="middle" fill="#6a6af2" font-size="9.7">12.59</text>
<rect x="395.6" y="388.6" width="41.9" height="5.8" fill="#5478f4" stroke="#454c78" stroke-width=".8"/>
<text transform="translate(416.6 402.1) scale(0.89 1)" text-anchor="middle" fill="#6a6af2" font-size="9.7">9.58</text>
<rect x="437.5" y="390.3" width="41.9" height="4.1" fill="#5478f4" stroke="#454c78" stroke-width=".8"/>
<text transform="translate(458.5 402.1) scale(0.89 1)" text-anchor="middle" fill="#6a6af2" font-size="9.7">6.46</text>
<path d="M674 393.9H477" stroke="#4a4a5a" stroke-width=".0"/>
<text transform="translate(15.1 425.8) scale(0.9 1)" text-anchor="start" fill="#8c8c8c" font-size="10.2">Theta</text>
<rect x="71.0" y="421.1" width="31.4" height="0.9" fill="#5478f4" stroke="#454c78" stroke-width=".8"/>
<text transform="translate(81.4 429.7) scale(0.89 1)" text-anchor="middle" fill="#6a6af2" font-size="9.7">1.85</text>
<rect x="102.4" y="421.0" width="41.9" height="1.0" fill="#f0747a" stroke="#9a5a60" stroke-width=".7"/>
<text transform="translate(123.3 420.9) scale(0.89 1)" text-anchor="middle" fill="#f26464" font-size="9.7">-2.37</text>
<rect x="144.2" y="421.0" width="41.9" height="2.5" fill="#f0747a" stroke="#9a5a60" stroke-width=".7"/>
<text transform="translate(165.2 420.9) scale(0.89 1)" text-anchor="middle" fill="#f26464" font-size="9.7">-9.52</text>
<rect x="186.1" y="421.0" width="41.9" height="4.4" fill="#f0747a" stroke="#9a5a60" stroke-width=".7"/>
<text transform="translate(207.1 420.9) scale(0.89 1)" text-anchor="middle" fill="#f26464" font-size="9.7">-19.13</text>
<rect x="228.0" y="421.0" width="41.9" height="6.5" fill="#f0747a" stroke="#9a5a60" stroke-width=".7"/>
<text transform="translate(249.0 420.9) scale(0.89 1)" text-anchor="middle" fill="#f26464" font-size="9.7">-29.24</text>
<rect x="270.0" y="421.0" width="41.9" height="8.1" fill="#f0747a" stroke="#9a5a60" stroke-width=".7"/>
<rect x="311.9" y="421.0" width="41.9" height="8.7" fill="#f0747a" stroke="#9a5a60" stroke-width=".7"/>
<text transform="translate(332.8 420.9) scale(0.89 1)" text-anchor="middle" fill="#f26464" font-size="9.7">-40.05</text>
<rect x="353.8" y="421.0" width="41.9" height="8.3" fill="#f0747a" stroke="#9a5a60" stroke-width=".7"/>
<text transform="translate(374.7 420.9) scale(0.89 1)" text-anchor="middle" fill="#f26464" font-size="9.7">-38.03</text>
<rect x="395.6" y="421.0" width="41.9" height="7.1" fill="#f0747a" stroke="#9a5a60" stroke-width=".7"/>
<text transform="translate(416.6 420.9) scale(0.89 1)" text-anchor="middle" fill="#f26464" font-size="9.7">-32.33</text>
<rect x="437.5" y="421.0" width="41.9" height="5.7" fill="#f0747a" stroke="#9a5a60" stroke-width=".7"/>
<text transform="translate(458.5 420.9) scale(0.89 1)" text-anchor="middle" fill="#f26464" font-size="9.7">-25.23</text>
<path d="M674 421.5H477" stroke="#4a4a5a" stroke-width=".0"/>
<text transform="translate(16.2 453.0) scale(0.9 1)" text-anchor="start" fill="#8c8c8c" font-size="10.2">Vega</text>
<rect x="71.0" y="448.1" width="31.4" height="1.1" fill="#5478f4" stroke="#454c78" stroke-width=".8"/>
<text transform="translate(81.4 456.9) scale(0.89 1)" text-anchor="middle" fill="#6a6af2" font-size="9.7">8.22</text>
<rect x="102.4" y="447.3" width="41.9" height="1.9" fill="#5478f4" stroke="#454c78" stroke-width=".8"/>
<text transform="translate(123.3 456.9) scale(0.89 1)" text-anchor="middle" fill="#6a6af2" font-size="9.7">19.67</text>
<rect x="144.2" y="445.9" width="41.9" height="3.3" fill="#5478f4" stroke="#454c78" stroke-width=".8"/>
<text transform="translate(165.2 456.9) scale(0.89 1)" text-anchor="middle" fill="#6a6af2" font-size="9.7">38.83</text>
<rect x="186.1" y="444.1" width="41.9" height="5.1" fill="#5478f4" stroke="#454c78" stroke-width=".8"/>
<text transform="translate(207.1 456.9) scale(0.89 1)" text-anchor="middle" fill="#6a6af2" font-size="9.7">64.17</text>
<rect x="228.0" y="442.2" width="41.9" height="7.0" fill="#5478f4" stroke="#454c78" stroke-width=".8"/>
<text transform="translate(249.0 456.9) scale(0.89 1)" text-anchor="middle" fill="#6a6af2" font-size="9.7">89.86</text>
<rect x="270.0" y="440.9" width="41.9" height="8.3" fill="#5478f4" stroke="#454c78" stroke-width=".8"/>
<rect x="311.9" y="440.6" width="41.9" height="8.6" fill="#5478f4" stroke="#454c78" stroke-width=".8"/>
<text transform="translate(332.8 456.9) scale(0.89 1)" text-anchor="middle" fill="#6a6af2" font-size="9.7">111.83</text>
<rect x="353.8" y="441.4" width="41.9" height="7.8" fill="#5478f4" stroke="#454c78" stroke-width=".8"/>
<text transform="translate(374.7 456.9) scale(0.89 1)" text-anchor="middle" fill="#6a6af2" font-size="9.7">101.23</text>
<rect x="395.6" y="442.9" width="41.9" height="6.3" fill="#5478f4" stroke="#454c78" stroke-width=".8"/>
<text transform="translate(416.6 456.9) scale(0.89 1)" text-anchor="middle" fill="#6a6af2" font-size="9.7">80.60</text>
<rect x="437.5" y="444.6" width="41.9" height="4.6" fill="#5478f4" stroke="#454c78" stroke-width=".8"/>
<text transform="translate(458.5 456.9) scale(0.89 1)" text-anchor="middle" fill="#6a6af2" font-size="9.7">56.86</text>
<path d="M674 448.7H477" stroke="#4a4a5a" stroke-width=".0"/>
<rect x="29.6" y="293.6" width="41.6" height="169.8" fill="#e7eef8" stroke="#8d9cb4" stroke-width=".9"/>
<text transform="translate(50.4 301.8) scale(0.89 1)" text-anchor="middle" fill="#2a2a2a" font-size="9.7">166.36</text>
<rect x="271.4" y="293.4" width="42.2" height="170" rx="3.6" fill="#e7eef8" fill-opacity=".88" stroke="#8d9cb4" stroke-width=".9"/>
<text transform="translate(292.6 301.8) scale(0.89 1)" text-anchor="middle" fill="#2a2a2a" font-size="9.7">195.25</text>
<text transform="translate(50.4 331.2) scale(0.86 1)" text-anchor="middle" fill="#2c2cf0" font-size="10" stroke="#2c2cf0" stroke-width=".18">4,223</text>
<text transform="translate(50.4 343.8) scale(0.86 1)" text-anchor="middle" fill="#2c2cf0" font-size="10" stroke="#2c2cf0" stroke-width=".18">630%</text>
<text transform="translate(50.4 371.3) scale(0.86 1)" text-anchor="middle" fill="#f23030" font-size="10" stroke="#f23030" stroke-width=".18">-197.07</text>
<text transform="translate(50.4 397.9) scale(0.86 1)" text-anchor="middle" fill="#2c2cf0" font-size="10" stroke="#2c2cf0" stroke-width=".18">0.71</text>
<text transform="translate(50.4 425.3) scale(0.86 1)" text-anchor="middle" fill="#2c2cf0" font-size="10" stroke="#2c2cf0" stroke-width=".18">3.47</text>
<text transform="translate(50.4 452.7) scale(0.86 1)" text-anchor="middle" fill="#2c2cf0" font-size="10" stroke="#2c2cf0" stroke-width=".18">3.83</text>
<text transform="translate(292.6 331.1) scale(0.86 1)" text-anchor="middle" fill="#2c2cf0" font-size="10" stroke="#2c2cf0" stroke-width=".18">415</text>
<text transform="translate(292.6 344.2) scale(0.86 1)" text-anchor="middle" fill="#2c2cf0" font-size="10" stroke="#2c2cf0" stroke-width=".18">61.9%</text>
<text transform="translate(292.6 371.1) scale(0.86 1)" text-anchor="middle" fill="#2c2cf0" font-size="10" stroke="#2c2cf0" stroke-width=".18">11.43</text>
<text transform="translate(292.6 398.1) scale(0.86 1)" text-anchor="middle" fill="#2c2cf0" font-size="10" stroke="#2c2cf0" stroke-width=".18">14.78</text>
<text transform="translate(292.6 425.4) scale(0.86 1)" text-anchor="middle" fill="#f23030" font-size="10" stroke="#f23030" stroke-width=".18">-37.24</text>
<text transform="translate(292.6 452.6) scale(0.86 1)" text-anchor="middle" fill="#2c2cf0" font-size="10" stroke="#2c2cf0" stroke-width=".18">108.36</text>
</svg>
</body></html>
